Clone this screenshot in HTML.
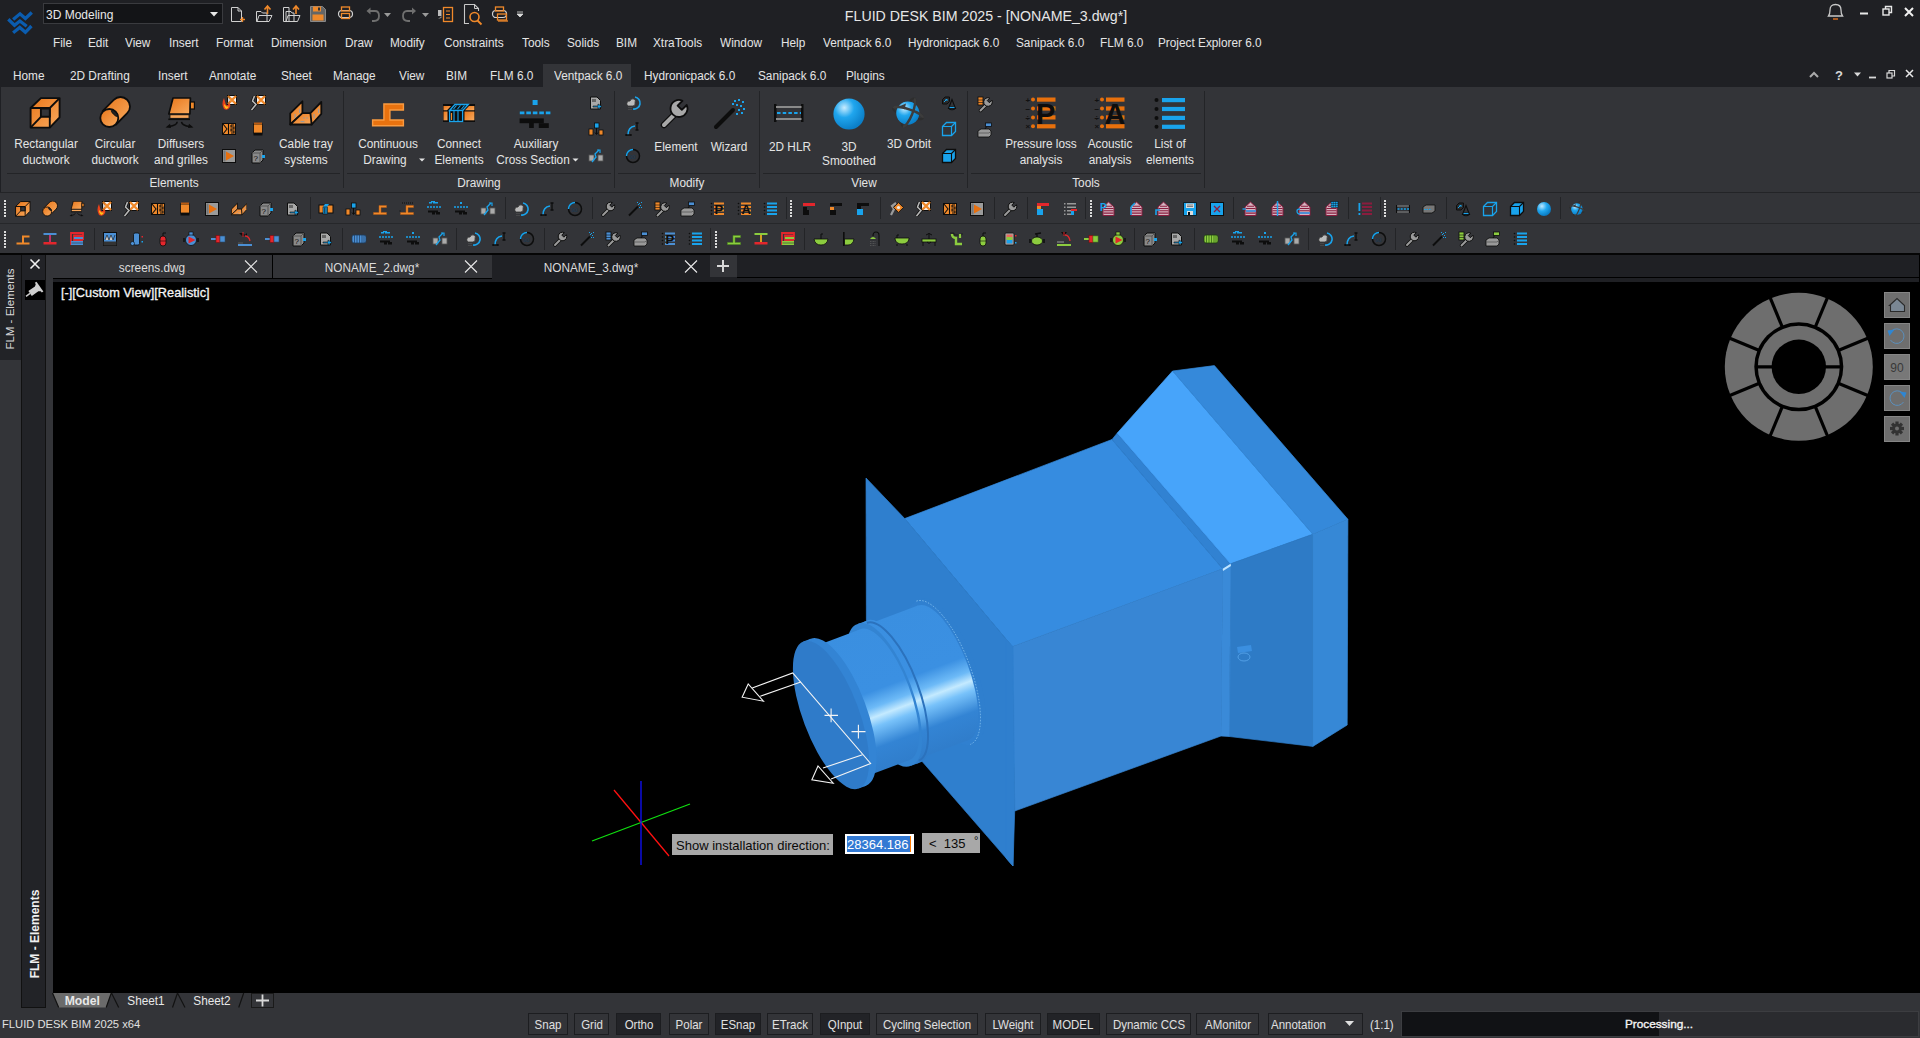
<!DOCTYPE html>
<html><head><meta charset="utf-8"><style>
html,body{margin:0;padding:0;width:1920px;height:1038px;overflow:hidden;background:#1f2024;}
.t{position:absolute;font-family:"Liberation Sans",sans-serif;white-space:pre;}
</style></head><body>
<div style="position:absolute;left:0px;top:0px;width:1920px;height:87px;background:#1f2024;"></div>
<div style="position:absolute;left:43px;top:3px;width:180px;height:21px;background:#131417;box-sizing:border-box;border:1px solid #3a3b3f;"></div>
<div class="t" style="left:46px;top:8.84px;transform-origin:left;font-size:12px;line-height:12px;color:#e8e8e8;">3D Modeling</div>
<svg style="position:absolute;left:210px;top:12px" width="8" height="5"><path d="M0 0H8L4 4.5Z" fill="#e8e8e8"/></svg>
<div class="t" style="left:686px;width:600px;text-align:center;top:8.78px;font-size:14.2px;line-height:14.2px;color:#e6e6e6;">FLUID DESK BIM 2025 - [NONAME_3.dwg*]</div>
<div class="t" style="left:52.5px;top:36.59px;transform-origin:left;font-size:12.3px;line-height:12.3px;color:#e4e4e4;transform:scaleX(0.96);">File</div>
<div class="t" style="left:87.5px;top:36.59px;transform-origin:left;font-size:12.3px;line-height:12.3px;color:#e4e4e4;transform:scaleX(0.96);">Edit</div>
<div class="t" style="left:125.4px;top:36.59px;transform-origin:left;font-size:12.3px;line-height:12.3px;color:#e4e4e4;transform:scaleX(0.96);">View</div>
<div class="t" style="left:168.5px;top:36.59px;transform-origin:left;font-size:12.3px;line-height:12.3px;color:#e4e4e4;transform:scaleX(0.96);">Insert</div>
<div class="t" style="left:215.5px;top:36.59px;transform-origin:left;font-size:12.3px;line-height:12.3px;color:#e4e4e4;transform:scaleX(0.96);">Format</div>
<div class="t" style="left:270.6px;top:36.59px;transform-origin:left;font-size:12.3px;line-height:12.3px;color:#e4e4e4;transform:scaleX(0.96);">Dimension</div>
<div class="t" style="left:344.6px;top:36.59px;transform-origin:left;font-size:12.3px;line-height:12.3px;color:#e4e4e4;transform:scaleX(0.96);">Draw</div>
<div class="t" style="left:390px;top:36.59px;transform-origin:left;font-size:12.3px;line-height:12.3px;color:#e4e4e4;transform:scaleX(0.96);">Modify</div>
<div class="t" style="left:444.4px;top:36.59px;transform-origin:left;font-size:12.3px;line-height:12.3px;color:#e4e4e4;transform:scaleX(0.96);">Constraints</div>
<div class="t" style="left:521.9px;top:36.59px;transform-origin:left;font-size:12.3px;line-height:12.3px;color:#e4e4e4;transform:scaleX(0.96);">Tools</div>
<div class="t" style="left:566.7px;top:36.59px;transform-origin:left;font-size:12.3px;line-height:12.3px;color:#e4e4e4;transform:scaleX(0.96);">Solids</div>
<div class="t" style="left:615.5px;top:36.59px;transform-origin:left;font-size:12.3px;line-height:12.3px;color:#e4e4e4;transform:scaleX(0.96);">BIM</div>
<div class="t" style="left:653px;top:36.59px;transform-origin:left;font-size:12.3px;line-height:12.3px;color:#e4e4e4;transform:scaleX(0.96);">XtraTools</div>
<div class="t" style="left:720px;top:36.59px;transform-origin:left;font-size:12.3px;line-height:12.3px;color:#e4e4e4;transform:scaleX(0.96);">Window</div>
<div class="t" style="left:780.7px;top:36.59px;transform-origin:left;font-size:12.3px;line-height:12.3px;color:#e4e4e4;transform:scaleX(0.96);">Help</div>
<div class="t" style="left:822.5px;top:36.59px;transform-origin:left;font-size:12.3px;line-height:12.3px;color:#e4e4e4;transform:scaleX(0.96);">Ventpack 6.0</div>
<div class="t" style="left:907.5px;top:36.59px;transform-origin:left;font-size:12.3px;line-height:12.3px;color:#e4e4e4;transform:scaleX(0.96);">Hydronicpack 6.0</div>
<div class="t" style="left:1016px;top:36.59px;transform-origin:left;font-size:12.3px;line-height:12.3px;color:#e4e4e4;transform:scaleX(0.96);">Sanipack 6.0</div>
<div class="t" style="left:1099.5px;top:36.59px;transform-origin:left;font-size:12.3px;line-height:12.3px;color:#e4e4e4;transform:scaleX(0.96);">FLM 6.0</div>
<div class="t" style="left:1158px;top:36.59px;transform-origin:left;font-size:12.3px;line-height:12.3px;color:#e4e4e4;transform:scaleX(0.96);">Project Explorer 6.0</div>
<svg style="position:absolute;left:0px;top:0px;overflow:visible" width="40" height="40" viewBox="0 0 40 40"><g fill="none" stroke="#0b5cae" stroke-width="3.3" stroke-linecap="square"><path d="M14.4 18.4L20 13.8L25.4 18.5L30.6 13.6"/><path d="M9.5 20.4L14.5 25.3L19.9 21L25.4 25.3"/><path d="M14.4 31.7L19.75 27.4L25.4 32.3L30.3 27.2"/></g></svg>
<svg style="position:absolute;left:0px;top:0px;overflow:visible" width="1920" height="30" viewBox="0 0 1920 30">
<g transform="translate(231,7)"><path d="M0.5 0.5H7L10.5 4V14.5H0.5Z" fill="none" stroke="#d0d0d0" stroke-width="1"/><path d="M7 0.5V4H10.5" fill="none" stroke="#d0d0d0"/><path d="M9 12.5H14M11.5 10V15" stroke="#f0892a" stroke-width="1.3"/></g>
<g transform="translate(256,5)"><path d="M0.5 6.5H5L6.5 8H11V16.5H0.5Z" fill="none" stroke="#d0d0d0"/><path d="M1 16.5L3 10.5H16L13 16.5Z" fill="none" stroke="#d0d0d0"/><path d="M11.5 9V1.5M8.5 4.5L11.5 1L14.5 4.5" stroke="#f0892a" stroke-width="1.6" fill="none"/></g>
<g transform="translate(283,5)"><path d="M0.5 2.5H6V16.5H0.5Z" fill="none" stroke="#d0d0d0"/><path d="M3 6.5H8L9 8H11V16.5H3Z" fill="none" stroke="#d0d0d0"/><path d="M3 16.5L5 10.5H17L14.5 16.5Z" fill="none" stroke="#d0d0d0"/><path d="M13 9V1.5M10 4.5L13 1L16 4.5" stroke="#f0892a" stroke-width="1.6" fill="none"/></g>
<g transform="translate(310,6)"><path d="M0.5 0.5H12.5L15.5 3.5V15.5H0.5Z" fill="#666" stroke="#888"/><rect x="3" y="0.5" width="8" height="5" fill="#f0892a"/><rect x="8" y="1.5" width="2" height="3" fill="#333"/><rect x="2.5" y="8.5" width="11" height="6" fill="#f0892a"/></g>
<g transform="translate(338,6)"><rect x="0.5" y="4.5" width="14" height="7" rx="3.5" fill="none" stroke="#d0d0d0" stroke-width="1.2"/><rect x="3.5" y="1" width="8" height="4" fill="none" stroke="#f0892a" stroke-width="1.3"/><rect x="3.5" y="7.5" width="8" height="5" fill="none" stroke="#f0892a" stroke-width="1.3"/></g>
<g transform="translate(366,8)"><path d="M3 3H9Q13 3 13 8Q13 13 8 13H6" fill="none" stroke="#6f6f6f" stroke-width="1.8"/><path d="M0.5 3L4.5 -0.5V6.5Z" fill="#6f6f6f"/></g>
<path d="M384 13H391L387.5 17Z" fill="#9a9a9a"/>
<g transform="translate(403,8)"><path d="M10 3H4Q0 3 0 8Q0 13 5 13H7" fill="none" stroke="#6f6f6f" stroke-width="1.8"/><path d="M13 3L9 -0.5V6.5Z" fill="#6f6f6f"/></g>
<path d="M422 13H429L425.5 17Z" fill="#9a9a9a"/>
<g transform="translate(438,7)"><rect x="0" y="3" width="3.5" height="6" fill="#bbb"/><path d="M0 12L3.5 9V11Z" fill="#888"/><rect x="5.5" y="0.5" width="9" height="14" fill="none" stroke="#f0892a" stroke-width="1.3"/><path d="M8 4H12M8 7.5H12M8 11H12" stroke="#f0892a" stroke-width="1.2"/></g>
<g transform="translate(464,4)"><path d="M0.5 0.5H10.5L14.5 4.5V7M0.5 0.5V19.5H5" fill="none" stroke="#c8c8c8" stroke-width="1.1"/><path d="M10.5 0.5V4.5H14.5" fill="none" stroke="#c8c8c8"/><circle cx="10.5" cy="13" r="4.5" fill="none" stroke="#f0892a" stroke-width="1.6"/><path d="M13.5 16.5L17.5 20.5" stroke="#f0892a" stroke-width="1.8"/></g>
<g transform="translate(492,6)"><rect x="0.5" y="4.5" width="14" height="7" rx="3.5" fill="none" stroke="#d0d0d0" stroke-width="1.2"/><rect x="3.5" y="1" width="8" height="4" fill="none" stroke="#f0892a" stroke-width="1.3"/><rect x="5.5" y="8" width="9" height="6" fill="none" stroke="#f0892a" stroke-width="1.3"/><path d="M6 15H16" stroke="#f0892a" stroke-width="1.3"/></g>
<path d="M517 12H523M517 14H523L520 17Z" fill="#dcdcdc" stroke="#dcdcdc" stroke-width=".8"/>
</svg>
<svg style="position:absolute;left:0px;top:0px;overflow:visible" width="1920" height="90" viewBox="0 0 1920 90">
<g transform="translate(1827,3)"><path d="M1.5 13Q3 11 3 7Q3 1.5 8.5 1.5Q14 1.5 14 7Q14 11 15.5 13Z" fill="none" stroke="#c8c8c8" stroke-width="1.3"/><path d="M6 16H11" stroke="#e07020" stroke-width="1.4"/></g>
<path d="M1860 13.5H1868" stroke="#e8e8e8" stroke-width="2"/>
<g fill="none" stroke="#e8e8e8" stroke-width="1.4"><rect x="1883" y="9" width="6" height="6"/><path d="M1885.5 9V6.5H1891.5V12.5H1889"/></g>
<path d="M1905 8L1913 16M1913 8L1905 16" stroke="#f0f0f0" stroke-width="2"/>
<path d="M1810 77L1814 73L1818 77" stroke="#aaa" stroke-width="2" fill="none"/>
<text x="1835" y="80" font-family="Liberation Sans" font-size="13" font-weight="bold" fill="#d8d8d8">?</text>
<path d="M1854 72.5H1861L1857.5 76.5Z" fill="#d8d8d8"/>
<path d="M1869 77.5H1876" stroke="#d8d8d8" stroke-width="1.8"/>
<g fill="none" stroke="#d8d8d8" stroke-width="1.2"><rect x="1887" y="73" width="5" height="5"/><path d="M1889 73V70.5H1894.5V76H1892"/></g>
<path d="M1906 70L1913 77M1913 70L1906 77" stroke="#e8e8e8" stroke-width="1.5"/>
</svg>
<div style="position:absolute;left:543px;top:64px;width:88px;height:23px;background:#333438;"></div>
<div class="t" style="left:12.5px;top:69.59px;transform-origin:left;font-size:12.3px;line-height:12.3px;color:#e4e4e4;transform:scaleX(0.96);">Home</div>
<div class="t" style="left:70.4px;top:69.59px;transform-origin:left;font-size:12.3px;line-height:12.3px;color:#e4e4e4;transform:scaleX(0.96);">2D Drafting</div>
<div class="t" style="left:157.5px;top:69.59px;transform-origin:left;font-size:12.3px;line-height:12.3px;color:#e4e4e4;transform:scaleX(0.96);">Insert</div>
<div class="t" style="left:209.4px;top:69.59px;transform-origin:left;font-size:12.3px;line-height:12.3px;color:#e4e4e4;transform:scaleX(0.96);">Annotate</div>
<div class="t" style="left:280.5px;top:69.59px;transform-origin:left;font-size:12.3px;line-height:12.3px;color:#e4e4e4;transform:scaleX(0.96);">Sheet</div>
<div class="t" style="left:333px;top:69.59px;transform-origin:left;font-size:12.3px;line-height:12.3px;color:#e4e4e4;transform:scaleX(0.96);">Manage</div>
<div class="t" style="left:398.6px;top:69.59px;transform-origin:left;font-size:12.3px;line-height:12.3px;color:#e4e4e4;transform:scaleX(0.96);">View</div>
<div class="t" style="left:446.4px;top:69.59px;transform-origin:left;font-size:12.3px;line-height:12.3px;color:#e4e4e4;transform:scaleX(0.96);">BIM</div>
<div class="t" style="left:489.7px;top:69.59px;transform-origin:left;font-size:12.3px;line-height:12.3px;color:#e4e4e4;transform:scaleX(0.96);">FLM 6.0</div>
<div class="t" style="left:553.8px;top:69.59px;transform-origin:left;font-size:12.3px;line-height:12.3px;color:#e4e4e4;transform:scaleX(0.96);">Ventpack 6.0</div>
<div class="t" style="left:643.5px;top:69.59px;transform-origin:left;font-size:12.3px;line-height:12.3px;color:#e4e4e4;transform:scaleX(0.96);">Hydronicpack 6.0</div>
<div class="t" style="left:757.7px;top:69.59px;transform-origin:left;font-size:12.3px;line-height:12.3px;color:#e4e4e4;transform:scaleX(0.96);">Sanipack 6.0</div>
<div class="t" style="left:845.5px;top:69.59px;transform-origin:left;font-size:12.3px;line-height:12.3px;color:#e4e4e4;transform:scaleX(0.96);">Plugins</div>
<div style="position:absolute;left:1px;top:87px;width:1919px;height:106px;background:#333438;"></div>
<div style="position:absolute;left:0px;top:192px;width:1920px;height:1px;background:#232427;"></div>
<div style="position:absolute;left:343px;top:91px;width:1px;height:97px;background:#232427;"></div>
<div style="position:absolute;left:614px;top:91px;width:1px;height:97px;background:#232427;"></div>
<div style="position:absolute;left:759px;top:91px;width:1px;height:97px;background:#232427;"></div>
<div style="position:absolute;left:967px;top:91px;width:1px;height:97px;background:#232427;"></div>
<div style="position:absolute;left:1204px;top:91px;width:1px;height:97px;background:#232427;"></div>
<div style="position:absolute;left:7px;top:173px;width:333px;height:1px;background:#232427;"></div>
<div style="position:absolute;left:347px;top:173px;width:264px;height:1px;background:#232427;"></div>
<div style="position:absolute;left:618px;top:173px;width:138px;height:1px;background:#232427;"></div>
<div style="position:absolute;left:763px;top:173px;width:201px;height:1px;background:#232427;"></div>
<div style="position:absolute;left:971px;top:173px;width:230px;height:1px;background:#232427;"></div>
<svg style="position:absolute;left:0px;top:0px;overflow:visible" width="1920" height="200" viewBox="0 0 1920 200">
<defs>
<linearGradient id="og" x1="0" y1="0" x2="1" y2="1"><stop offset="0" stop-color="#e8761a"/><stop offset="1" stop-color="#f9aa5e"/></linearGradient>
<radialGradient id="bsph" cx="35%" cy="30%" r="70%"><stop offset="0" stop-color="#c8ecff"/><stop offset=".45" stop-color="#20a6ee"/><stop offset="1" stop-color="#0b7fc8"/></radialGradient>
</defs>
<!-- rect ductwork -->
<g stroke="#0d0d0d" stroke-width="1.9" stroke-linejoin="round">
<path d="M30.6 108L40.9 98.1H59.6V117.3L49.8 127.6H30.6Z" fill="url(#og)"/>
<path d="M30.6 108H49.8V127.6M49.8 108L59.6 98.1" fill="none"/>
<rect x="40.9" y="108.5" width="8.9" height="8.3" fill="#333438"/>
<path d="M30.6 127.6L40.9 116.8" fill="none"/>
</g>
<!-- circular -->
<g stroke="#0d0d0d" stroke-width="1.8" stroke-linejoin="round" fill="url(#og)">
<path d="M102.55 111.1L113.75 99.8A9.5 9.5 0 0 1 127.25 113.2L116.05 124.5Z"/>
<circle cx="109.3" cy="118" r="9"/>
</g>
<ellipse cx="114.6" cy="113.3" rx="4.2" ry="1.5" transform="rotate(45 114.6 113.3)" fill="#222" stroke="#0d0d0d" stroke-width=".8"/>
<!-- diffusers -->
<g transform="translate(165,97.5)"><path d="M8 0.5H25.4L24.9 16.5H3.8Z" fill="url(#og)" stroke="#0d0d0d" stroke-width="1.7" stroke-linejoin="round"/><rect x="25.4" y="4.5" width="4" height="7" fill="#f0892a" stroke="#0d0d0d" stroke-width="1.2"/><rect x="5" y="17.3" width="19" height="3.5" fill="#f7a65a" stroke="#0d0d0d" stroke-width=".8"/><rect x="3.3" y="21" width="21.7" height="1.6" fill="#0d0d0d"/><path d="M12.2 24.3Q12 28 4 29M16.5 24.3Q17 28 25 29" stroke="#0d0d0d" stroke-width="1.6" fill="none"/><path d="M0.5 30L5 26.3L6 30.5Z M28.5 30L24 26.3L23 30.5Z" fill="#0d0d0d"/></g>
<!-- small elements col -->
<g transform="translate(221,95)"><rect x="6.5" y="0.5" width="9" height="9" fill="#f2f2f2" stroke="#0d0d0d" stroke-width="1"/><path d="M7 1L15 9M15 1L7 9" stroke="#f0892a" stroke-width="2.4"/><path d="M8 1V9" stroke="#0d0d0d" stroke-width=".3"/><path d="M3 3Q0 9 3 14Q7 16 9 12Q10 9 8 8Q7 11 5 10Q4 7 3 3Z" fill="#e8401a"/><path d="M3 9Q3 13 5.5 14Q8 13 7.5 11Q6 12 5 11Q4 10 3 9Z" fill="#ffc21a"/></g>
<g transform="translate(250,95)"><rect x="6.5" y="0.5" width="9" height="9" fill="#f2f2f2" stroke="#0d0d0d" stroke-width="1"/><path d="M7 1L15 9M15 1L7 9" stroke="#f0892a" stroke-width="2.4"/><path d="M4.5 1L2.5 6L6 9.5L1.5 15" stroke="#0d0d0d" stroke-width="3" fill="none"/><path d="M4.5 1L2.5 6L6 9.5L1.5 15" stroke="#b8b8b8" stroke-width="1.6" fill="none"/></g>
<g transform="translate(221,121)"><rect x="1.5" y="2.5" width="13" height="11" fill="#f0892a" stroke="#0d0d0d" stroke-width="1"/><path d="M2 3L6 8L2 13M7.5 2.5V13.5M10 4H13M10 4V6H13V8H10V10H13V12H10" stroke="#0d0d0d" stroke-width="1.1" fill="none"/></g>
<g transform="translate(250,121)"><rect x="3.5" y="3" width="9" height="9" fill="#f0892a" stroke="#0d0d0d" stroke-width=".8"/><rect x="3.5" y="12" width="9" height="2.5" fill="#0d0d0d"/><rect x="4" y="1.5" width="8" height="1.5" fill="#b85a12"/></g>
<g transform="translate(221,148)"><rect x="1.5" y="1.5" width="13" height="13" fill="#9b9b9b" stroke="#0d0d0d" stroke-width="1"/><path d="M5 3.5L13 8L5 12.5Z" fill="#e8700f"/><rect x="2.5" y="2.5" width="2" height="11" fill="#777"/></g>
<g transform="translate(250,148)"><path d="M2 5L5 2H13V12L10 15H2Z" fill="#8a8a8a" stroke="#0d0d0d" stroke-width="1"/><path d="M2 5H10V15M10 5L13 2" stroke="#555" fill="none"/><text x="3.5" y="13" font-size="8" font-family="Liberation Sans" fill="#0d0d0d">?</text><rect x="12" y="7" width="3" height="3" fill="#19a3ec"/></g>
<!-- cable tray -->
<g stroke="#0d0d0d" stroke-width="1.8" stroke-linejoin="round" fill="url(#og)">
<path d="M290.2 113.4L302.4 101.3V113.3L290.2 124.5Z"/>
<path d="M290.2 124.5H311.7V113.1H302.4Z"/>
<path d="M310.4 113.1L321.3 102V113.8L311.7 124.5Z"/>
</g>
<g fill="#9a9a9a"><rect x="294.5" y="114" width="1.2" height="4"/><rect x="299" y="109" width="1.2" height="4"/><rect x="313.5" y="114" width="1.2" height="4"/><rect x="318" y="109" width="1.2" height="4"/><rect x="300.5" y="121" width="4" height="1.2"/><circle cx="304" cy="118" r=".8"/><circle cx="307" cy="118" r=".8"/></g>
<!-- continuous drawing 372-404, 104-126 -->
<g transform="translate(372.6,104)"><path d="M0 16H11.3V0H30.8V6H17.3V16H30.8V21.8H0Z" fill="#e8720f" stroke="#f99a40" stroke-width="1.4"/></g>
<!-- connect elements -->
<rect x="443" y="104" width="32" height="18" fill="#0d0d0d"/>
<path d="M443.5 106H451L447 110.3H443.5Z" fill="url(#og)"/>
<rect x="443.5" y="111.5" width="4" height="8.8" fill="url(#og)"/>
<path d="M469 106H474.4V110.3H465Z" fill="url(#og)"/>
<rect x="464.5" y="111.5" width="9.9" height="8.8" fill="url(#og)"/>
<path d="M449.6 110.5L454.9 104.5H468.3L462.6 110.5Z" fill="#0d0d0d" stroke="#19a3ec" stroke-width="1.3"/>
<rect x="449.6" y="110.5" width="13" height="11" fill="#0d0d0d" stroke="#19a3ec" stroke-width="1.3"/>
<path d="M454 111V121M458 111V121M453.5 109L456.5 105.5M457.5 109L460.5 105.5M461.5 109L464.5 105.5" stroke="#19a3ec" stroke-width="1.1"/>
<path d="M451.5 113V120" stroke="#f0892a" stroke-width="1.2"/>
<!-- auxiliary cross section -->
<rect x="532.6" y="100" width="5" height="5" fill="#19a3ec"/>
<path d="M519.8 112.9H550.4" stroke="#19a3ec" stroke-width="2.8" stroke-dasharray="4.6 1.9"/>
<rect x="519.6" y="118.4" width="24.2" height="4.8" fill="#0d0d0d"/>
<rect x="529.1" y="123" width="4.7" height="5" fill="#0d0d0d"/>
<rect x="538.8" y="123.2" width="10" height="4.8" fill="#0d0d0d"/>
<path d="M419 158.5H425L422 161.5Z" fill="#e4e4e4"/>
<path d="M572.5 158.5H578.5L575.5 161.5Z" fill="#e4e4e4"/>
<g transform="translate(588,95)"><path d="M2.5 2H9L12.5 5.5V14H2.5Z" fill="#a9a9a9" stroke="#0d0d0d" stroke-width="1"/><rect x="4" y="4" width="4" height="3" fill="#666"/><path d="M5 11H10V9L14 11.5L10 14V12H5Z" fill="#19a3ec" stroke="#0d0d0d" stroke-width=".6"/></g>
<g transform="translate(588,121)"><rect x="1" y="8" width="4" height="6" fill="#f0892a" stroke="#0d0d0d" stroke-width=".8"/><rect x="11" y="9" width="4" height="5" fill="#f0892a" stroke="#0d0d0d" stroke-width=".8"/><rect x="6.5" y="2" width="4.5" height="5" fill="#19a3ec" stroke="#0d0d0d" stroke-width=".8"/><path d="M8.5 7V13M7 11.5L8.5 13.5L10 11.5" stroke="#0d0d0d" stroke-width="1" fill="none"/></g>
<g transform="translate(588,148)"><rect x="1" y="7" width="5" height="6" fill="#aaa" stroke="#555" stroke-width=".8"/><rect x="10" y="7" width="5" height="6" fill="#aaa" stroke="#555" stroke-width=".8"/><path d="M4 14L8 9L7 6L11 2" stroke="#19a3ec" stroke-width="1.3" fill="none"/><path d="M9 2H12V5" stroke="#19a3ec" stroke-width="1.2" fill="none"/></g>
<g transform="translate(625,95)"><path d="M2 10Q1 6 5 6Q6 3 9 4Q11 5 10 8Q11 10 8 11H3Z" fill="#bbb" stroke="#333" stroke-width=".8"/><path d="M10 2A6 6 0 0 1 8 14" stroke="#19a3ec" stroke-width="1.6" fill="none"/><path d="M4 12V15M6 12V15" stroke="#666" stroke-width=".8" stroke-dasharray="1 1"/></g>
<g transform="translate(625,121)"><path d="M3 14Q3 6 10 5" stroke="#19a3ec" stroke-width="1.6" fill="none"/><path d="M12 2V9M10.5 2H13.5M10.5 9H13.5M1 13V15M1 14H6M6 13V15" stroke="#0d0d0d" stroke-width="1.3"/></g>
<g transform="translate(625,148)"><circle cx="8" cy="8" r="6.5" fill="none" stroke="#0d0d0d" stroke-width="1.5"/><path d="M1.5 8A6.5 6.5 0 0 1 8 1.5" stroke="#19a3ec" stroke-width="1.5" fill="none"/><text x="4" y="10.5" font-size="6" font-family="Liberation Sans" fill="#1a3a55">90</text></g>
<!-- element wrench 660-690, 99-129 -->
<g transform="translate(659,99)"><path d="M5 26L17 14" stroke="#0d0d0d" stroke-width="6.5" stroke-linecap="round"/><path d="M5 26L17 14" stroke="#a8a8a8" stroke-width="4" stroke-linecap="round"/><path d="M27.74 6A8.5 8.5 0 1 1 23.5 1.76L18.59 6.67L22.83 10.91Z" fill="#a8a8a8" stroke="#0d0d0d" stroke-width="1.8" stroke-linejoin="round"/></g>
<!-- wizard 713-745 -->
<g transform="translate(713,99)"><path d="M3 28L20 11" stroke="#0d0d0d" stroke-width="4" stroke-linecap="round"/><g fill="#19a3ec"><rect x="21" y="1" width="2" height="2"/><rect x="25" y="0" width="2" height="2"/><rect x="29" y="2" width="2" height="2"/><rect x="23" y="5" width="2" height="2"/><rect x="27" y="6" width="2" height="2"/><rect x="30" y="9" width="2" height="2"/><rect x="25" y="10" width="2" height="2"/><rect x="28" y="13" width="2" height="2"/><rect x="23" y="14" width="2" height="2"/><rect x="19" y="4" width="2" height="2"/></g></g>
<!-- 2D HLR 774-803, 104-122 -->
<g transform="translate(774,104)"><rect x="0" y="0" width="2.5" height="18" fill="#0d0d0d"/><rect x="27" y="0" width="2.5" height="18" fill="#0d0d0d"/><path d="M2 3H27.5M2 15H27.5" stroke="#8a8a8a" stroke-width="2"/><path d="M3 9H27" stroke="#19a3ec" stroke-width="2" stroke-dasharray="3.5 2.2"/></g>
<circle cx="849" cy="114" r="15.6" fill="url(#bsph)"/>
<!-- orbit -->
<ellipse cx="908" cy="113" rx="15.5" ry="4.2" transform="rotate(18 908 113)" fill="none" stroke="#2e2e2e" stroke-width="2.2"/>
<ellipse cx="908.5" cy="112.5" rx="15" ry="4.2" transform="rotate(-68 908.5 112.5)" fill="none" stroke="#2e2e2e" stroke-width="2.2"/>
<circle cx="907.8" cy="113.1" r="11.6" fill="url(#bsph)"/>
<path d="M893.3 108.2A15.5 4.2 18 0 1 922.7 117.8" fill="none" stroke="#3c3c3c" stroke-width="2.4"/>
<path d="M914.1 98.6A15 4.2 -68 0 1 902.9 126.4" fill="none" stroke="#3c3c3c" stroke-width="2.4"/>
<path d="M900 106L906 103.5L904.5 109.5Z" fill="#3c3c3c"/>
<g transform="translate(941,95)"><path d="M1.5 4.5L4 2H8.5V6.5L6 9H1.5Z" fill="#2a2a2a" stroke="#0d0d0d" stroke-width="1"/><path d="M3 7L6 4M4 5H7" stroke="#19a3ec" stroke-width="1"/><path d="M11 4.5L7.5 13.5H14.5Z" fill="none" stroke="#0d0d0d" stroke-width="1.1"/><ellipse cx="11" cy="13.3" rx="3.3" ry="1.5" fill="none" stroke="#0d0d0d" stroke-width="1"/><path d="M8.5 12.5H13.5" stroke="#19a3ec" stroke-width="1.2"/></g>
<g transform="translate(941,121)"><path d="M1.5 5.5L5.5 1.5H14.5V10.5L10.5 14.5H1.5Z" fill="none" stroke="#19a3ec" stroke-width="1.3"/><path d="M1.5 5.5H10.5V14.5M10.5 5.5L14.5 1.5" stroke="#19a3ec" stroke-width="1.2" fill="none"/></g>
<g transform="translate(941,148)"><path d="M1.5 5.5L5.5 1.5H14.5V10.5L10.5 14.5H1.5Z" fill="#19a3ec" stroke="#0d0d0d" stroke-width="1.3"/><path d="M1.5 5.5H10.5V14.5M10.5 5.5L14.5 1.5" stroke="#0d0d0d" stroke-width="1.1" fill="none"/></g>
<g transform="translate(977,96)"><rect x="1" y="1" width="5" height="8" fill="#f0892a" stroke="#0d0d0d" stroke-width=".8"/><path d="M1 4H6M1 6.5H6" stroke="#0d0d0d" stroke-width=".6"/><path d="M3.5 14.5L10 8" stroke="#0d0d0d" stroke-width="3.4" stroke-linecap="round"/><path d="M3.5 14.5L10 8" stroke="#9b9b9b" stroke-width="1.9" stroke-linecap="round"/><g transform="translate(0.5,0.5)"><path d="M14.41 3.71A4.3 4.3 0 1 1 12.29 1.59L9.79 4.09L11.91 6.21Z" fill="#9b9b9b" stroke="#0d0d0d" stroke-width="1" stroke-linejoin="round"/></g></g>
<g transform="translate(977,122)"><path d="M1 9L4 7H12L14 9V13L12 15H1Z" fill="#999" stroke="#0d0d0d" stroke-width=".8"/><path d="M1 11H12L14 9" stroke="#555" fill="none" stroke-width=".8"/><path d="M8 7L10 4" stroke="#0d0d0d" stroke-width="1"/><rect x="8.5" y="1" width="6" height="3.5" fill="#4b8fd4" stroke="#0d0d0d" stroke-width=".8"/></g>
<g transform="translate(1025,96)"><rect x="12" y="1.5" width="18.5" height="4.2" fill="#e8700c"/><circle cx="8" cy="3.6" r="2" fill="#e8700c"/><text x="0.5" y="6.7" font-size="8" font-weight="bold" font-family="Liberation Sans" fill="#111">+</text><rect x="12" y="10.4" width="18.5" height="4.2" fill="#e8700c"/><circle cx="8" cy="12.5" r="2" fill="#e8700c"/><text x="0.5" y="15.6" font-size="8" font-weight="bold" font-family="Liberation Sans" fill="#111">−</text><rect x="12" y="19.3" width="18.5" height="4.2" fill="#e8700c"/><circle cx="8" cy="21.4" r="2" fill="#e8700c"/><text x="0.5" y="24.5" font-size="8" font-weight="bold" font-family="Liberation Sans" fill="#111">÷</text><rect x="12" y="28.2" width="18.5" height="4.2" fill="#e8700c"/><circle cx="8" cy="30.3" r="2" fill="#e8700c"/><text x="0.5" y="33.4" font-size="8" font-weight="bold" font-family="Liberation Sans" fill="#111">×</text><text x="11" y="27.5" font-size="29" font-weight="bold" font-family="Liberation Sans" fill="#0d0d0d">P</text></g><g transform="translate(1094,96)"><rect x="12" y="1.5" width="18.5" height="4.2" fill="#e8700c"/><circle cx="8" cy="3.6" r="2" fill="#e8700c"/><text x="0.5" y="6.7" font-size="8" font-weight="bold" font-family="Liberation Sans" fill="#111">+</text><rect x="12" y="10.4" width="18.5" height="4.2" fill="#e8700c"/><circle cx="8" cy="12.5" r="2" fill="#e8700c"/><text x="0.5" y="15.6" font-size="8" font-weight="bold" font-family="Liberation Sans" fill="#111">−</text><rect x="12" y="19.3" width="18.5" height="4.2" fill="#e8700c"/><circle cx="8" cy="21.4" r="2" fill="#e8700c"/><text x="0.5" y="24.5" font-size="8" font-weight="bold" font-family="Liberation Sans" fill="#111">÷</text><rect x="12" y="28.2" width="18.5" height="4.2" fill="#e8700c"/><circle cx="8" cy="30.3" r="2" fill="#e8700c"/><text x="0.5" y="33.4" font-size="8" font-weight="bold" font-family="Liberation Sans" fill="#111">×</text><text x="10.5" y="27.5" font-size="29" font-weight="bold" font-family="Liberation Sans" fill="#0d0d0d">A</text></g><g transform="translate(1154,97)"><rect x="8" y="1.0" width="23" height="4.2" fill="#19a3ec"/><circle cx="2.5" cy="3.1" r="2" fill="#0d0d0d"/><rect x="8" y="9.9" width="23" height="4.2" fill="#19a3ec"/><circle cx="2.5" cy="12.0" r="2" fill="#0d0d0d"/><rect x="8" y="18.8" width="23" height="4.2" fill="#19a3ec"/><circle cx="2.5" cy="20.9" r="2" fill="#0d0d0d"/><rect x="8" y="27.7" width="23" height="4.2" fill="#19a3ec"/><circle cx="2.5" cy="29.8" r="2" fill="#0d0d0d"/></g></svg>
<div class="t" style="left:-254.2px;width:600px;text-align:center;top:137.59px;font-size:12.3px;line-height:12.3px;color:#e4e4e4;transform:scaleX(0.96);">Rectangular</div>
<div class="t" style="left:-254.5px;width:600px;text-align:center;top:153.84px;font-size:12.3px;line-height:12.3px;color:#e4e4e4;transform:scaleX(0.96);">ductwork</div>
<div class="t" style="left:-185px;width:600px;text-align:center;top:137.59px;font-size:12.3px;line-height:12.3px;color:#e4e4e4;transform:scaleX(0.96);">Circular</div>
<div class="t" style="left:-184.7px;width:600px;text-align:center;top:153.84px;font-size:12.3px;line-height:12.3px;color:#e4e4e4;transform:scaleX(0.96);">ductwork</div>
<div class="t" style="left:-119.5px;width:600px;text-align:center;top:137.59px;font-size:12.3px;line-height:12.3px;color:#e4e4e4;transform:scaleX(0.96);">Diffusers</div>
<div class="t" style="left:-119.4px;width:600px;text-align:center;top:153.84px;font-size:12.3px;line-height:12.3px;color:#e4e4e4;transform:scaleX(0.96);">and grilles</div>
<div class="t" style="left:6px;width:600px;text-align:center;top:137.59px;font-size:12.3px;line-height:12.3px;color:#e4e4e4;transform:scaleX(0.96);">Cable tray</div>
<div class="t" style="left:6px;width:600px;text-align:center;top:153.84px;font-size:12.3px;line-height:12.3px;color:#e4e4e4;transform:scaleX(0.96);">systems</div>
<div class="t" style="left:88px;width:600px;text-align:center;top:138.09px;font-size:12.3px;line-height:12.3px;color:#e4e4e4;transform:scaleX(0.96);">Continuous</div>
<div class="t" style="left:85.30000000000001px;width:600px;text-align:center;top:154.09px;font-size:12.3px;line-height:12.3px;color:#e4e4e4;transform:scaleX(0.96);">Drawing</div>
<div class="t" style="left:159px;width:600px;text-align:center;top:138.09px;font-size:12.3px;line-height:12.3px;color:#e4e4e4;transform:scaleX(0.96);">Connect</div>
<div class="t" style="left:159.2px;width:600px;text-align:center;top:154.09px;font-size:12.3px;line-height:12.3px;color:#e4e4e4;transform:scaleX(0.96);">Elements</div>
<div class="t" style="left:235.70000000000005px;width:600px;text-align:center;top:138.09px;font-size:12.3px;line-height:12.3px;color:#e4e4e4;transform:scaleX(0.96);">Auxiliary</div>
<div class="t" style="left:232.89999999999998px;width:600px;text-align:center;top:154.09px;font-size:12.3px;line-height:12.3px;color:#e4e4e4;transform:scaleX(0.96);">Cross Section</div>
<div class="t" style="left:375.5px;width:600px;text-align:center;top:141.09px;font-size:12.3px;line-height:12.3px;color:#e4e4e4;transform:scaleX(0.96);">Element</div>
<div class="t" style="left:429.29999999999995px;width:600px;text-align:center;top:141.09px;font-size:12.3px;line-height:12.3px;color:#e4e4e4;transform:scaleX(0.96);">Wizard</div>
<div class="t" style="left:489.70000000000005px;width:600px;text-align:center;top:141.09px;font-size:12.3px;line-height:12.3px;color:#e4e4e4;transform:scaleX(0.96);">2D HLR</div>
<div class="t" style="left:549px;width:600px;text-align:center;top:141.09px;font-size:12.3px;line-height:12.3px;color:#e4e4e4;transform:scaleX(0.96);">3D</div>
<div class="t" style="left:549px;width:600px;text-align:center;top:154.69px;font-size:12.3px;line-height:12.3px;color:#e4e4e4;transform:scaleX(0.96);">Smoothed</div>
<div class="t" style="left:608.5px;width:600px;text-align:center;top:137.84px;font-size:12.3px;line-height:12.3px;color:#e4e4e4;transform:scaleX(0.96);">3D Orbit</div>
<div class="t" style="left:741.3px;width:600px;text-align:center;top:138.09px;font-size:12.3px;line-height:12.3px;color:#e4e4e4;transform:scaleX(0.96);">Pressure loss</div>
<div class="t" style="left:741.3px;width:600px;text-align:center;top:153.84px;font-size:12.3px;line-height:12.3px;color:#e4e4e4;transform:scaleX(0.96);">analysis</div>
<div class="t" style="left:810.3px;width:600px;text-align:center;top:138.09px;font-size:12.3px;line-height:12.3px;color:#e4e4e4;transform:scaleX(0.96);">Acoustic</div>
<div class="t" style="left:810.3px;width:600px;text-align:center;top:153.84px;font-size:12.3px;line-height:12.3px;color:#e4e4e4;transform:scaleX(0.96);">analysis</div>
<div class="t" style="left:870.3px;width:600px;text-align:center;top:138.09px;font-size:12.3px;line-height:12.3px;color:#e4e4e4;transform:scaleX(0.96);">List of</div>
<div class="t" style="left:870px;width:600px;text-align:center;top:153.84px;font-size:12.3px;line-height:12.3px;color:#e4e4e4;transform:scaleX(0.96);">elements</div>
<div class="t" style="left:-126px;width:600px;text-align:center;top:176.59px;font-size:12.3px;line-height:12.3px;color:#e4e4e4;transform:scaleX(0.96);">Elements</div>
<div class="t" style="left:179px;width:600px;text-align:center;top:176.59px;font-size:12.3px;line-height:12.3px;color:#e4e4e4;transform:scaleX(0.96);">Drawing</div>
<div class="t" style="left:387px;width:600px;text-align:center;top:176.59px;font-size:12.3px;line-height:12.3px;color:#e4e4e4;transform:scaleX(0.96);">Modify</div>
<div class="t" style="left:564px;width:600px;text-align:center;top:176.59px;font-size:12.3px;line-height:12.3px;color:#e4e4e4;transform:scaleX(0.96);">View</div>
<div class="t" style="left:786px;width:600px;text-align:center;top:176.59px;font-size:12.3px;line-height:12.3px;color:#e4e4e4;transform:scaleX(0.96);">Tools</div>
<div style="position:absolute;left:0px;top:193px;width:1920px;height:30px;background:#333438;"></div>
<div style="position:absolute;left:0px;top:223px;width:1920px;height:1px;background:#26272a;"></div>
<div style="position:absolute;left:0px;top:224px;width:1920px;height:30px;background:#333438;"></div>
<div style="position:absolute;left:0px;top:253px;width:1920px;height:2px;background:#050505;"></div>
<div style="position:absolute;left:310px;top:197px;width:1px;height:22px;background:#232427;"></div>
<div style="position:absolute;left:505px;top:197px;width:1px;height:22px;background:#232427;"></div>
<div style="position:absolute;left:592px;top:197px;width:1px;height:22px;background:#232427;"></div>
<div style="position:absolute;left:786px;top:197px;width:1px;height:22px;background:#232427;"></div>
<div style="position:absolute;left:880px;top:197px;width:1px;height:22px;background:#232427;"></div>
<div style="position:absolute;left:994px;top:197px;width:1px;height:22px;background:#232427;"></div>
<div style="position:absolute;left:1027px;top:197px;width:1px;height:22px;background:#232427;"></div>
<div style="position:absolute;left:1085px;top:197px;width:1px;height:22px;background:#232427;"></div>
<div style="position:absolute;left:1233px;top:197px;width:1px;height:22px;background:#232427;"></div>
<div style="position:absolute;left:1348px;top:197px;width:1px;height:22px;background:#232427;"></div>
<div style="position:absolute;left:1380px;top:197px;width:1px;height:22px;background:#232427;"></div>
<div style="position:absolute;left:1446px;top:197px;width:1px;height:22px;background:#232427;"></div>
<div style="position:absolute;left:1560px;top:197px;width:1px;height:22px;background:#232427;"></div>
<div style="position:absolute;left:94px;top:228px;width:1px;height:22px;background:#232427;"></div>
<div style="position:absolute;left:342px;top:228px;width:1px;height:22px;background:#232427;"></div>
<div style="position:absolute;left:456px;top:228px;width:1px;height:22px;background:#232427;"></div>
<div style="position:absolute;left:544px;top:228px;width:1px;height:22px;background:#232427;"></div>
<div style="position:absolute;left:710px;top:228px;width:1px;height:22px;background:#232427;"></div>
<div style="position:absolute;left:804px;top:228px;width:1px;height:22px;background:#232427;"></div>
<div style="position:absolute;left:1134px;top:228px;width:1px;height:22px;background:#232427;"></div>
<div style="position:absolute;left:1194px;top:228px;width:1px;height:22px;background:#232427;"></div>
<div style="position:absolute;left:1308px;top:228px;width:1px;height:22px;background:#232427;"></div>
<div style="position:absolute;left:1395px;top:228px;width:1px;height:22px;background:#232427;"></div>
<div style="position:absolute;left:4px;top:200px;width:2px;height:2px;background:#dcdcdc;"></div>
<div style="position:absolute;left:4px;top:203px;width:2px;height:2px;background:#dcdcdc;"></div>
<div style="position:absolute;left:4px;top:206px;width:2px;height:2px;background:#dcdcdc;"></div>
<div style="position:absolute;left:4px;top:209px;width:2px;height:2px;background:#dcdcdc;"></div>
<div style="position:absolute;left:4px;top:212px;width:2px;height:2px;background:#dcdcdc;"></div>
<div style="position:absolute;left:4px;top:215px;width:2px;height:2px;background:#dcdcdc;"></div>
<div style="position:absolute;left:790px;top:200px;width:2px;height:2px;background:#dcdcdc;"></div>
<div style="position:absolute;left:790px;top:203px;width:2px;height:2px;background:#dcdcdc;"></div>
<div style="position:absolute;left:790px;top:206px;width:2px;height:2px;background:#dcdcdc;"></div>
<div style="position:absolute;left:790px;top:209px;width:2px;height:2px;background:#dcdcdc;"></div>
<div style="position:absolute;left:790px;top:212px;width:2px;height:2px;background:#dcdcdc;"></div>
<div style="position:absolute;left:790px;top:215px;width:2px;height:2px;background:#dcdcdc;"></div>
<div style="position:absolute;left:1090px;top:200px;width:2px;height:2px;background:#dcdcdc;"></div>
<div style="position:absolute;left:1090px;top:203px;width:2px;height:2px;background:#dcdcdc;"></div>
<div style="position:absolute;left:1090px;top:206px;width:2px;height:2px;background:#dcdcdc;"></div>
<div style="position:absolute;left:1090px;top:209px;width:2px;height:2px;background:#dcdcdc;"></div>
<div style="position:absolute;left:1090px;top:212px;width:2px;height:2px;background:#dcdcdc;"></div>
<div style="position:absolute;left:1090px;top:215px;width:2px;height:2px;background:#dcdcdc;"></div>
<div style="position:absolute;left:1384px;top:200px;width:2px;height:2px;background:#dcdcdc;"></div>
<div style="position:absolute;left:1384px;top:203px;width:2px;height:2px;background:#dcdcdc;"></div>
<div style="position:absolute;left:1384px;top:206px;width:2px;height:2px;background:#dcdcdc;"></div>
<div style="position:absolute;left:1384px;top:209px;width:2px;height:2px;background:#dcdcdc;"></div>
<div style="position:absolute;left:1384px;top:212px;width:2px;height:2px;background:#dcdcdc;"></div>
<div style="position:absolute;left:1384px;top:215px;width:2px;height:2px;background:#dcdcdc;"></div>
<div style="position:absolute;left:4px;top:231px;width:2px;height:2px;background:#dcdcdc;"></div>
<div style="position:absolute;left:4px;top:234px;width:2px;height:2px;background:#dcdcdc;"></div>
<div style="position:absolute;left:4px;top:237px;width:2px;height:2px;background:#dcdcdc;"></div>
<div style="position:absolute;left:4px;top:240px;width:2px;height:2px;background:#dcdcdc;"></div>
<div style="position:absolute;left:4px;top:243px;width:2px;height:2px;background:#dcdcdc;"></div>
<div style="position:absolute;left:4px;top:246px;width:2px;height:2px;background:#dcdcdc;"></div>
<div style="position:absolute;left:715px;top:231px;width:2px;height:2px;background:#dcdcdc;"></div>
<div style="position:absolute;left:715px;top:234px;width:2px;height:2px;background:#dcdcdc;"></div>
<div style="position:absolute;left:715px;top:237px;width:2px;height:2px;background:#dcdcdc;"></div>
<div style="position:absolute;left:715px;top:240px;width:2px;height:2px;background:#dcdcdc;"></div>
<div style="position:absolute;left:715px;top:243px;width:2px;height:2px;background:#dcdcdc;"></div>
<div style="position:absolute;left:715px;top:246px;width:2px;height:2px;background:#dcdcdc;"></div>
<svg style="position:absolute;left:15.0px;top:200.5px" width="16" height="16" viewBox="0 0 16 16"><g transform="scale(0.5) translate(-29.5,-97)"><!-- rect ductwork -->
<g stroke="#0d0d0d" stroke-width="1.9" stroke-linejoin="round">
<path d="M30.6 108L40.9 98.1H59.6V117.3L49.8 127.6H30.6Z" fill="url(#og)"/>
<path d="M30.6 108H49.8V127.6M49.8 108L59.6 98.1" fill="none"/>
<rect x="40.9" y="108.5" width="8.9" height="8.3" fill="#333438"/>
<path d="M30.6 127.6L40.9 116.8" fill="none"/>
</g>
</g></svg>
<svg style="position:absolute;left:42.0px;top:200.5px" width="16" height="16" viewBox="0 0 16 16"><g transform="scale(0.5) translate(-99,-97)"><!-- circular -->
<g stroke="#0d0d0d" stroke-width="1.8" stroke-linejoin="round" fill="url(#og)">
<path d="M102.55 111.1L113.75 99.8A9.5 9.5 0 0 1 127.25 113.2L116.05 124.5Z"/>
<circle cx="109.3" cy="118" r="9"/>
</g>
<ellipse cx="114.6" cy="113.3" rx="4.2" ry="1.5" transform="rotate(45 114.6 113.3)" fill="#222" stroke="#0d0d0d" stroke-width=".8"/>
</g></svg>
<svg style="position:absolute;left:69.0px;top:200.5px" width="16" height="16" viewBox="0 0 16 16"><g transform="scale(0.5) translate(-164.5,-97.5)"><!-- diffusers -->
<g transform="translate(165,97.5)"><path d="M8 0.5H25.4L24.9 16.5H3.8Z" fill="url(#og)" stroke="#0d0d0d" stroke-width="1.7" stroke-linejoin="round"/><rect x="25.4" y="4.5" width="4" height="7" fill="#f0892a" stroke="#0d0d0d" stroke-width="1.2"/><rect x="5" y="17.3" width="19" height="3.5" fill="#f7a65a" stroke="#0d0d0d" stroke-width=".8"/><rect x="3.3" y="21" width="21.7" height="1.6" fill="#0d0d0d"/><path d="M12.2 24.3Q12 28 4 29M16.5 24.3Q17 28 25 29" stroke="#0d0d0d" stroke-width="1.6" fill="none"/><path d="M0.5 30L5 26.3L6 30.5Z M28.5 30L24 26.3L23 30.5Z" fill="#0d0d0d"/></g>
</g></svg>
<svg style="position:absolute;left:96.0px;top:200.5px" width="16" height="16" viewBox="0 0 16 16"><rect x="6.5" y="0.5" width="9" height="9" fill="#f2f2f2" stroke="#0d0d0d" stroke-width="1"/><path d="M7 1L15 9M15 1L7 9" stroke="#f0892a" stroke-width="2.4"/><path d="M8 1V9" stroke="#0d0d0d" stroke-width=".3"/><path d="M3 3Q0 9 3 14Q7 16 9 12Q10 9 8 8Q7 11 5 10Q4 7 3 3Z" fill="#e8401a"/><path d="M3 9Q3 13 5.5 14Q8 13 7.5 11Q6 12 5 11Q4 10 3 9Z" fill="#ffc21a"/></svg>
<svg style="position:absolute;left:123.0px;top:200.5px" width="16" height="16" viewBox="0 0 16 16"><rect x="6.5" y="0.5" width="9" height="9" fill="#f2f2f2" stroke="#0d0d0d" stroke-width="1"/><path d="M7 1L15 9M15 1L7 9" stroke="#f0892a" stroke-width="2.4"/><path d="M4.5 1L2.5 6L6 9.5L1.5 15" stroke="#0d0d0d" stroke-width="3" fill="none"/><path d="M4.5 1L2.5 6L6 9.5L1.5 15" stroke="#b8b8b8" stroke-width="1.6" fill="none"/></svg>
<svg style="position:absolute;left:149.5px;top:200.5px" width="16" height="16" viewBox="0 0 16 16"><rect x="1.5" y="2.5" width="13" height="11" fill="#f0892a" stroke="#0d0d0d" stroke-width="1"/><path d="M2 3L6 8L2 13M7.5 2.5V13.5M10 4H13M10 4V6H13V8H10V10H13V12H10" stroke="#0d0d0d" stroke-width="1.1" fill="none"/></svg>
<svg style="position:absolute;left:176.7px;top:200.5px" width="16" height="16" viewBox="0 0 16 16"><rect x="3.5" y="3" width="9" height="9" fill="#f0892a" stroke="#0d0d0d" stroke-width=".8"/><rect x="3.5" y="12" width="9" height="2.5" fill="#0d0d0d"/><rect x="4" y="1.5" width="8" height="1.5" fill="#b85a12"/></svg>
<svg style="position:absolute;left:203.7px;top:200.5px" width="16" height="16" viewBox="0 0 16 16"><rect x="1.5" y="1.5" width="13" height="13" fill="#9b9b9b" stroke="#0d0d0d" stroke-width="1"/><path d="M5 3.5L13 8L5 12.5Z" fill="#e8700f"/><rect x="2.5" y="2.5" width="2" height="11" fill="#777"/></svg>
<svg style="position:absolute;left:230.8px;top:200.5px" width="16" height="16" viewBox="0 0 16 16"><g transform="scale(0.5) translate(-289.5,-97)"><!-- cable tray -->
<g stroke="#0d0d0d" stroke-width="1.8" stroke-linejoin="round" fill="url(#og)">
<path d="M290.2 113.4L302.4 101.3V113.3L290.2 124.5Z"/>
<path d="M290.2 124.5H311.7V113.1H302.4Z"/>
<path d="M310.4 113.1L321.3 102V113.8L311.7 124.5Z"/>
</g>
<g fill="#9a9a9a"><rect x="294.5" y="114" width="1.2" height="4"/><rect x="299" y="109" width="1.2" height="4"/><rect x="313.5" y="114" width="1.2" height="4"/><rect x="318" y="109" width="1.2" height="4"/><rect x="300.5" y="121" width="4" height="1.2"/><circle cx="304" cy="118" r=".8"/><circle cx="307" cy="118" r=".8"/></g>
</g></svg>
<svg style="position:absolute;left:257.5px;top:200.5px" width="16" height="16" viewBox="0 0 16 16"><path d="M2 5L5 2H13V12L10 15H2Z" fill="#8a8a8a" stroke="#0d0d0d" stroke-width="1"/><path d="M2 5H10V15M10 5L13 2" stroke="#555" fill="none"/><text x="3.5" y="13" font-size="8" font-family="Liberation Sans" fill="#0d0d0d">?</text><rect x="12" y="7" width="3" height="3" fill="#19a3ec"/></svg>
<svg style="position:absolute;left:284.5px;top:200.5px" width="16" height="16" viewBox="0 0 16 16"><path d="M2.5 2H9L12.5 5.5V14H2.5Z" fill="#a9a9a9" stroke="#0d0d0d" stroke-width="1"/><rect x="4" y="4" width="4" height="3" fill="#666"/><path d="M5 11H10V9L14 11.5L10 14V12H5Z" fill="#19a3ec" stroke="#0d0d0d" stroke-width=".6"/></svg>
<svg style="position:absolute;left:317.8px;top:200.5px" width="16" height="16" viewBox="0 0 16 16"><rect x="1" y="4" width="14" height="8" fill="#f0892a" stroke="#0d0d0d" stroke-width="1"/><path d="M5 6L7 3H11L9 6Z" fill="#19a3ec"/><rect x="5" y="6" width="4.5" height="7" fill="#19a3ec" stroke="#0d0d0d" stroke-width=".6"/><path d="M6.5 6.5V12.5M8 6.5V12.5" stroke="#0d0d0d" stroke-width=".6"/></svg>
<svg style="position:absolute;left:345.0px;top:200.5px" width="16" height="16" viewBox="0 0 16 16"><rect x="1" y="8" width="4" height="6" fill="#f0892a" stroke="#0d0d0d" stroke-width=".8"/><rect x="11" y="9" width="4" height="5" fill="#f0892a" stroke="#0d0d0d" stroke-width=".8"/><rect x="6.5" y="2" width="4.5" height="5" fill="#19a3ec" stroke="#0d0d0d" stroke-width=".8"/><path d="M8.5 7V13M7 11.5L8.5 13.5L10 11.5" stroke="#0d0d0d" stroke-width="1" fill="none"/></svg>
<svg style="position:absolute;left:372.0px;top:200.5px" width="16" height="16" viewBox="0 0 16 16"><path d="M1.5 13.5H14.5V11.5H9V6.5H14.5V4.5H7V11.5H1.5Z" fill="#f0892a" stroke="#b85a12" stroke-width=".5"/></svg>
<svg style="position:absolute;left:399.0px;top:200.5px" width="16" height="16" viewBox="0 0 16 16"><path d="M1.5 13.5H14.5V11.5H9V6.5H14.5V4.5H7V11.5H1.5Z" fill="#f0892a" stroke="#b85a12" stroke-width=".5"/><path d="M1 10.5V11M1 9V9.5M3 2H4M5 2H6M7 2H8M9 2H10M11 2H12M13 2H14" stroke="#0d0d0d" stroke-width="1"/></svg>
<svg style="position:absolute;left:426.0px;top:200.5px" width="16" height="16" viewBox="0 0 16 16"><rect x="3" y="1" width="3" height="1.5" fill="#19a3ec"/><rect x="7" y="1" width="5" height="1.5" fill="#19a3ec"/><rect x="5" y="0" width="4" height="1.3" fill="#19a3ec"/><path d="M1 6H15" stroke="#19a3ec" stroke-width="1.6" stroke-dasharray="2 1"/><path d="M2 9.5H12V11.5H9V13.5H6V11.5H2Z" fill="#0d0d0d"/><rect x="10" y="11" width="4" height="2.5" fill="#0d0d0d"/></svg>
<svg style="position:absolute;left:453.0px;top:200.5px" width="16" height="16" viewBox="0 0 16 16"><rect x="7" y="1" width="2" height="2" fill="#19a3ec"/><path d="M1 6H15" stroke="#19a3ec" stroke-width="1.6" stroke-dasharray="2 1"/><path d="M2 9.5H12V11.5H9V13.5H6V11.5H2Z" fill="#0d0d0d"/><rect x="10" y="11" width="4" height="2.5" fill="#0d0d0d"/></svg>
<svg style="position:absolute;left:480.0px;top:200.5px" width="16" height="16" viewBox="0 0 16 16"><rect x="1" y="7" width="5" height="6" fill="#aaa" stroke="#555" stroke-width=".8"/><rect x="10" y="7" width="5" height="6" fill="#aaa" stroke="#555" stroke-width=".8"/><path d="M4 14L8 9L7 6L11 2" stroke="#19a3ec" stroke-width="1.3" fill="none"/><path d="M9 2H12V5" stroke="#19a3ec" stroke-width="1.2" fill="none"/></svg>
<svg style="position:absolute;left:513.0px;top:200.5px" width="16" height="16" viewBox="0 0 16 16"><path d="M2 10Q1 6 5 6Q6 3 9 4Q11 5 10 8Q11 10 8 11H3Z" fill="#bbb" stroke="#333" stroke-width=".8"/><path d="M10 2A6 6 0 0 1 8 14" stroke="#19a3ec" stroke-width="1.6" fill="none"/><path d="M4 12V15M6 12V15" stroke="#666" stroke-width=".8" stroke-dasharray="1 1"/></svg>
<svg style="position:absolute;left:540.0px;top:200.5px" width="16" height="16" viewBox="0 0 16 16"><path d="M3 14Q3 6 10 5" stroke="#19a3ec" stroke-width="1.6" fill="none"/><path d="M12 2V9M10.5 2H13.5M10.5 9H13.5M1 13V15M1 14H6M6 13V15" stroke="#0d0d0d" stroke-width="1.3"/></svg>
<svg style="position:absolute;left:567.0px;top:200.5px" width="16" height="16" viewBox="0 0 16 16"><circle cx="8" cy="8" r="6.5" fill="none" stroke="#0d0d0d" stroke-width="1.5"/><path d="M1.5 8A6.5 6.5 0 0 1 8 1.5" stroke="#19a3ec" stroke-width="1.5" fill="none"/><text x="4" y="10.5" font-size="6" font-family="Liberation Sans" fill="#1a3a55">90</text></svg>
<svg style="position:absolute;left:600.0px;top:200.5px" width="16" height="16" viewBox="0 0 16 16"><path d="M3 14L9.5 7.5" stroke="#0d0d0d" stroke-width="3.4" stroke-linecap="round"/><path d="M3 14L9.5 7.5" stroke="#9b9b9b" stroke-width="1.9" stroke-linecap="round"/><path d="M14.41 3.71A4.3 4.3 0 1 1 12.29 1.59L9.79 4.09L11.91 6.21Z" fill="#9b9b9b" stroke="#0d0d0d" stroke-width="1" stroke-linejoin="round"/></svg>
<svg style="position:absolute;left:627.0px;top:200.5px" width="16" height="16" viewBox="0 0 16 16"><path d="M2 14.5L11 5.5" stroke="#0d0d0d" stroke-width="2"/><g fill="#19a3ec"><rect x="10" y="1" width="1" height="1"/><rect x="12" y="2" width="1" height="1"/><rect x="14" y="1" width="1" height="1"/><rect x="13" y="4" width="1" height="1"/><rect x="14" y="6" width="1" height="1"/><rect x="11" y="3" width="1" height="1"/><rect x="12" y="6" width="1" height="1"/></g></svg>
<svg style="position:absolute;left:654.0px;top:200.5px" width="16" height="16" viewBox="0 0 16 16"><rect x="1" y="1" width="5" height="8" fill="#f0892a" stroke="#0d0d0d" stroke-width=".8"/><path d="M1 4H6M1 6.5H6" stroke="#0d0d0d" stroke-width=".6"/><path d="M3.5 14.5L10 8" stroke="#0d0d0d" stroke-width="3.4" stroke-linecap="round"/><path d="M3.5 14.5L10 8" stroke="#9b9b9b" stroke-width="1.9" stroke-linecap="round"/><g transform="translate(0.5,0.5)"><path d="M14.41 3.71A4.3 4.3 0 1 1 12.29 1.59L9.79 4.09L11.91 6.21Z" fill="#9b9b9b" stroke="#0d0d0d" stroke-width="1" stroke-linejoin="round"/></g></svg>
<svg style="position:absolute;left:680.0px;top:200.5px" width="16" height="16" viewBox="0 0 16 16"><path d="M1 9L4 7H12L14 9V13L12 15H1Z" fill="#999" stroke="#0d0d0d" stroke-width=".8"/><path d="M1 11H12L14 9" stroke="#555" fill="none" stroke-width=".8"/><path d="M8 7L10 4" stroke="#0d0d0d" stroke-width="1"/><rect x="8.5" y="1" width="6" height="3.5" fill="#4b8fd4" stroke="#0d0d0d" stroke-width=".8"/></svg>
<svg style="position:absolute;left:709.0px;top:200.5px" width="16" height="16" viewBox="0 0 16 16"><g fill="#f0892a"><rect x="5" y="1.5" width="10" height="2"/><rect x="5" y="5" width="10" height="2"/><rect x="5" y="8.5" width="10" height="2"/><rect x="5" y="12" width="10" height="2"/></g><g fill="#0d0d0d"><circle cx="2.5" cy="2.5" r=".8"/><circle cx="2.5" cy="6" r=".8"/><circle cx="2.5" cy="9.5" r=".8"/><circle cx="2.5" cy="13" r=".8"/></g><text x="5.5" y="13" font-size="13" font-weight="bold" font-family="Liberation Sans" fill="#0d0d0d">P</text></svg>
<svg style="position:absolute;left:736.0px;top:200.5px" width="16" height="16" viewBox="0 0 16 16"><g fill="#f0892a"><rect x="5" y="1.5" width="10" height="2"/><rect x="5" y="5" width="10" height="2"/><rect x="5" y="8.5" width="10" height="2"/><rect x="5" y="12" width="10" height="2"/></g><g fill="#0d0d0d"><circle cx="2.5" cy="2.5" r=".8"/><circle cx="2.5" cy="6" r=".8"/><circle cx="2.5" cy="9.5" r=".8"/><circle cx="2.5" cy="13" r=".8"/></g><text x="5.5" y="13" font-size="13" font-weight="bold" font-family="Liberation Sans" fill="#0d0d0d">A</text></svg>
<svg style="position:absolute;left:762.0px;top:200.5px" width="16" height="16" viewBox="0 0 16 16"><g fill="#19a3ec"><rect x="5" y="1.5" width="10" height="2"/><rect x="5" y="5" width="10" height="2"/><rect x="5" y="8.5" width="10" height="2"/><rect x="5" y="12" width="10" height="2"/></g><g fill="#0d0d0d"><circle cx="2.5" cy="2.5" r=".8"/><circle cx="2.5" cy="6" r=".8"/><circle cx="2.5" cy="9.5" r=".8"/><circle cx="2.5" cy="13" r=".8"/></g></svg>
<svg style="position:absolute;left:801.0px;top:200.5px" width="16" height="16" viewBox="0 0 16 16"><rect x="2" y="2" width="12" height="3" fill="#e3262c"/><rect x="2" y="6" width="4" height="8" fill="#0d0d0d"/><rect x="6" y="9" width="2" height="5" fill="#0d0d0d"/></svg>
<svg style="position:absolute;left:828.0px;top:200.5px" width="16" height="16" viewBox="0 0 16 16"><rect x="2" y="2" width="12" height="3" fill="#0d0d0d"/><rect x="2" y="6" width="4" height="3" fill="#f0892a"/><rect x="2" y="9" width="6" height="5" fill="#0d0d0d"/></svg>
<svg style="position:absolute;left:855.0px;top:200.5px" width="16" height="16" viewBox="0 0 16 16"><rect x="2" y="2" width="12" height="3" fill="#0d0d0d"/><rect x="2" y="5" width="4" height="3" fill="#0d0d0d"/><rect x="2" y="8" width="6" height="6" fill="#19a3ec"/></svg>
<svg style="position:absolute;left:888.0px;top:200.5px" width="16" height="16" viewBox="0 0 16 16"><path d="M3 14L6 8L4 5L8 2" stroke="#9b9b9b" stroke-width="2.2" fill="none"/><rect x="7" y="3" width="7" height="7" transform="rotate(45 10.5 6.5)" fill="#f0892a" stroke="#0d0d0d" stroke-width=".8"/><circle cx="10.5" cy="6.5" r="1.6" fill="#eee"/></svg>
<svg style="position:absolute;left:915.0px;top:200.5px" width="16" height="16" viewBox="0 0 16 16"><rect x="6.5" y="0.5" width="9" height="9" fill="#f2f2f2" stroke="#0d0d0d" stroke-width="1"/><path d="M7 1L15 9M15 1L7 9" stroke="#f0892a" stroke-width="2.4"/><path d="M4.5 1L2.5 6L6 9.5L1.5 15" stroke="#0d0d0d" stroke-width="3" fill="none"/><path d="M4.5 1L2.5 6L6 9.5L1.5 15" stroke="#b8b8b8" stroke-width="1.6" fill="none"/></svg>
<svg style="position:absolute;left:942.0px;top:200.5px" width="16" height="16" viewBox="0 0 16 16"><rect x="1.5" y="2.5" width="13" height="11" fill="#f0892a" stroke="#0d0d0d" stroke-width="1"/><path d="M2 3L6 8L2 13M7.5 2.5V13.5M10 4H13M10 4V6H13V8H10V10H13V12H10" stroke="#0d0d0d" stroke-width="1.1" fill="none"/></svg>
<svg style="position:absolute;left:969.0px;top:200.5px" width="16" height="16" viewBox="0 0 16 16"><rect x="1.5" y="1.5" width="13" height="13" fill="#9b9b9b" stroke="#0d0d0d" stroke-width="1"/><path d="M5 3.5L13 8L5 12.5Z" fill="#e8700f"/><rect x="2.5" y="2.5" width="2" height="11" fill="#777"/></svg>
<svg style="position:absolute;left:1002.0px;top:200.5px" width="16" height="16" viewBox="0 0 16 16"><path d="M3 14L9.5 7.5" stroke="#0d0d0d" stroke-width="3.4" stroke-linecap="round"/><path d="M3 14L9.5 7.5" stroke="#9b9b9b" stroke-width="1.9" stroke-linecap="round"/><path d="M14.41 3.71A4.3 4.3 0 1 1 12.29 1.59L9.79 4.09L11.91 6.21Z" fill="#9b9b9b" stroke="#0d0d0d" stroke-width="1" stroke-linejoin="round"/></svg>
<svg style="position:absolute;left:1034.5px;top:200.5px" width="16" height="16" viewBox="0 0 16 16"><rect x="2" y="2" width="12" height="3" fill="#e3262c"/><rect x="2" y="5" width="4" height="3" fill="#f0892a"/><rect x="2" y="8" width="6" height="6" fill="#19a3ec"/></svg>
<svg style="position:absolute;left:1062.0px;top:200.5px" width="16" height="16" viewBox="0 0 16 16"><g fill="#999"><rect x="5" y="2" width="9" height="1.5"/><rect x="5" y="5.5" width="9" height="1.5"/><rect x="5" y="9" width="4" height="1.5"/><rect x="5" y="12.5" width="4" height="1.5"/></g><rect x="9" y="8" width="6" height="2" fill="#e3262c"/><rect x="9" y="10" width="3" height="4" fill="#19a3ec"/><g fill="#999"><rect x="2" y="2" width="1.5" height="1.5"/><rect x="2" y="5.5" width="1.5" height="1.5"/><rect x="2" y="9" width="1.5" height="1.5"/><rect x="2" y="12.5" width="1.5" height="1.5"/></g></svg>
<svg style="position:absolute;left:1100.0px;top:200.5px" width="16" height="16" viewBox="0 0 16 16"><path d="M3 6L8.5 1L14 6V14.5H3Z" fill="#d4b4c0" stroke="#8a1c3e" stroke-width="1"/><path d="M3.5 7.5H13.5M3.5 9.8H13.5M3.5 12.1H13.5M5 5.3H12" stroke="#8a1c3e" stroke-width="1.1"/><text x="0" y="10" font-size="10" font-weight="bold" font-family="Liberation Sans" fill="#19a3ec">P</text></svg>
<svg style="position:absolute;left:1127.5px;top:200.5px" width="16" height="16" viewBox="0 0 16 16"><path d="M3 6L8.5 1L14 6V14.5H3Z" fill="#d4b4c0" stroke="#8a1c3e" stroke-width="1"/><path d="M3.5 7.5H13.5M3.5 9.8H13.5M3.5 12.1H13.5M5 5.3H12" stroke="#8a1c3e" stroke-width="1.1"/><path d="M3 6V14M3 6L7 2" stroke="#19a3ec" stroke-width="1.6" fill="none"/></svg>
<svg style="position:absolute;left:1154.5px;top:200.5px" width="16" height="16" viewBox="0 0 16 16"><path d="M3 6L8.5 1L14 6V14.5H3Z" fill="#d4b4c0" stroke="#8a1c3e" stroke-width="1"/><path d="M3.5 7.5H13.5M3.5 9.8H13.5M3.5 12.1H13.5M5 5.3H12" stroke="#8a1c3e" stroke-width="1.1"/><path d="M1 14V9H5" stroke="#19a3ec" stroke-width="1.6" fill="none"/></svg>
<svg style="position:absolute;left:1181.7px;top:200.5px" width="16" height="16" viewBox="0 0 16 16"><path d="M1.5 1.5H14.5V14.5H1.5Z" fill="#19a3ec" stroke="#0d0d0d" stroke-width=".8"/><rect x="4" y="2.5" width="8" height="4.5" fill="#ddd"/><path d="M5 4H11M5 5.5H11" stroke="#555" stroke-width=".7"/><rect x="5" y="10" width="6" height="4" fill="#ddd"/><rect x="6" y="11" width="2" height="3" fill="#0d0d0d"/></svg>
<svg style="position:absolute;left:1208.7px;top:200.5px" width="16" height="16" viewBox="0 0 16 16"><rect x="1.5" y="1.5" width="13" height="13" fill="#19a3ec" stroke="#0d0d0d" stroke-width="1"/><path d="M5 5L11 11M11 5L5 11" stroke="#8a1c3e" stroke-width="1.3"/></svg>
<svg style="position:absolute;left:1242.0px;top:200.5px" width="16" height="16" viewBox="0 0 16 16"><path d="M3 6L8.5 1L14 6V14.5H3Z" fill="#d4b4c0" stroke="#8a1c3e" stroke-width="1"/><path d="M3.5 7.5H13.5M3.5 9.8H13.5M3.5 12.1H13.5M5 5.3H12" stroke="#8a1c3e" stroke-width="1.1"/><path d="M0.5 8H4" stroke="#19a3ec" stroke-width="1.3"/><rect x="4" y="9" width="10" height="2" fill="#4b8fd4"/></svg>
<svg style="position:absolute;left:1269.0px;top:200.5px" width="16" height="16" viewBox="0 0 16 16"><path d="M3 6L8.5 1L14 6V14.5H3Z" fill="#d4b4c0" stroke="#8a1c3e" stroke-width="1"/><path d="M3.5 7.5H13.5M3.5 9.8H13.5M3.5 12.1H13.5M5 5.3H12" stroke="#8a1c3e" stroke-width="1.1"/><path d="M8.5 0V15" stroke="#19a3ec" stroke-width="1.5"/></svg>
<svg style="position:absolute;left:1296.0px;top:200.5px" width="16" height="16" viewBox="0 0 16 16"><path d="M3 6L8.5 1L14 6V14.5H3Z" fill="#d4b4c0" stroke="#8a1c3e" stroke-width="1"/><path d="M3.5 7.5H13.5M3.5 9.8H13.5M3.5 12.1H13.5M5 5.3H12" stroke="#8a1c3e" stroke-width="1.1"/><path d="M4 13Q1 13 1 10Q1 8 4 8" stroke="#19a3ec" stroke-width="1.3" fill="none"/><rect x="4" y="11" width="10" height="2" fill="#4b8fd4"/></svg>
<svg style="position:absolute;left:1323.0px;top:200.5px" width="16" height="16" viewBox="0 0 16 16"><path d="M3 6L8.5 1L14 6V14.5H3Z" fill="#d4b4c0" stroke="#8a1c3e" stroke-width="1"/><path d="M3.5 7.5H13.5M3.5 9.8H13.5M3.5 12.1H13.5M5 5.3H12" stroke="#8a1c3e" stroke-width="1.1"/><rect x="8" y="0.5" width="7" height="6" fill="#19a3ec" stroke="#0d0d0d" stroke-width=".5"/><path d="M10.3 0.5V6.5M12.6 0.5V6.5M8 2.5H15M8 4.5H15" stroke="#0d0d0d" stroke-width=".4"/></svg>
<svg style="position:absolute;left:1356.6px;top:200.5px" width="16" height="16" viewBox="0 0 16 16"><g fill="#8a1c3e"><rect x="5" y="1.5" width="10" height="2"/><rect x="5" y="5" width="10" height="2"/><rect x="5" y="8.5" width="10" height="2"/><rect x="5" y="12" width="10" height="2"/></g><rect x="1.5" y="2" width="1.8" height="8" fill="#19a3ec"/><rect x="1.5" y="12" width="1.8" height="2" fill="#19a3ec"/></svg>
<svg style="position:absolute;left:1395.0px;top:200.5px" width="16" height="16" viewBox="0 0 16 16"><rect x="1" y="4" width="1.3" height="8" fill="#0d0d0d"/><rect x="13.7" y="4" width="1.3" height="8" fill="#0d0d0d"/><path d="M2 5H14M2 11H14" stroke="#888" stroke-width="1.2"/><path d="M2.5 8H14" stroke="#19a3ec" stroke-width="1.3" stroke-dasharray="2 1.2"/></svg>
<svg style="position:absolute;left:1421.0px;top:200.5px" width="16" height="16" viewBox="0 0 16 16"><path d="M2 6L5 4H14V10L11 12H2Z" fill="#777" stroke="#0d0d0d" stroke-width=".8"/><path d="M3 8.5H10" stroke="#19a3ec" stroke-width="1.2" stroke-dasharray="1.5 1"/></svg>
<svg style="position:absolute;left:1455.0px;top:200.5px" width="16" height="16" viewBox="0 0 16 16"><path d="M1.5 4.5L4 2H8.5V6.5L6 9H1.5Z" fill="#2a2a2a" stroke="#0d0d0d" stroke-width="1"/><path d="M3 7L6 4M4 5H7" stroke="#19a3ec" stroke-width="1"/><path d="M11 4.5L7.5 13.5H14.5Z" fill="none" stroke="#0d0d0d" stroke-width="1.1"/><ellipse cx="11" cy="13.3" rx="3.3" ry="1.5" fill="none" stroke="#0d0d0d" stroke-width="1"/><path d="M8.5 12.5H13.5" stroke="#19a3ec" stroke-width="1.2"/></svg>
<svg style="position:absolute;left:1482.0px;top:200.5px" width="16" height="16" viewBox="0 0 16 16"><path d="M1.5 5.5L5.5 1.5H14.5V10.5L10.5 14.5H1.5Z" fill="none" stroke="#19a3ec" stroke-width="1.3"/><path d="M1.5 5.5H10.5V14.5M10.5 5.5L14.5 1.5" stroke="#19a3ec" stroke-width="1.2" fill="none"/></svg>
<svg style="position:absolute;left:1508.7px;top:200.5px" width="16" height="16" viewBox="0 0 16 16"><path d="M1.5 5.5L5.5 1.5H14.5V10.5L10.5 14.5H1.5Z" fill="#19a3ec" stroke="#0d0d0d" stroke-width="1.3"/><path d="M1.5 5.5H10.5V14.5M10.5 5.5L14.5 1.5" stroke="#0d0d0d" stroke-width="1.1" fill="none"/></svg>
<svg style="position:absolute;left:1535.8px;top:200.5px" width="16" height="16" viewBox="0 0 16 16"><defs><radialGradient id="sg" cx="35%" cy="30%" r="70%"><stop offset="0" stop-color="#bfe8ff"/><stop offset=".5" stop-color="#22a8f0"/><stop offset="1" stop-color="#0a7cc4"/></radialGradient></defs><circle cx="8" cy="8" r="7" fill="url(#sg)"/></svg>
<svg style="position:absolute;left:1568.7px;top:200.5px" width="16" height="16" viewBox="0 0 16 16"><g transform="scale(0.5) translate(-892,-97)"><!-- orbit -->
<ellipse cx="908" cy="113" rx="15.5" ry="4.2" transform="rotate(18 908 113)" fill="none" stroke="#2e2e2e" stroke-width="2.2"/>
<ellipse cx="908.5" cy="112.5" rx="15" ry="4.2" transform="rotate(-68 908.5 112.5)" fill="none" stroke="#2e2e2e" stroke-width="2.2"/>
<circle cx="907.8" cy="113.1" r="11.6" fill="url(#bsph)"/>
<path d="M893.3 108.2A15.5 4.2 18 0 1 922.7 117.8" fill="none" stroke="#3c3c3c" stroke-width="2.4"/>
<path d="M914.1 98.6A15 4.2 -68 0 1 902.9 126.4" fill="none" stroke="#3c3c3c" stroke-width="2.4"/>
<path d="M900 106L906 103.5L904.5 109.5Z" fill="#3c3c3c"/>
</g></svg>
<svg style="position:absolute;left:15.0px;top:231.0px" width="16" height="16" viewBox="0 0 16 16"><path d="M1.5 13.5H14.5V11.5H9V6.5H14.5V4.5H7V11.5H1.5Z" fill="#f0892a"/></svg>
<svg style="position:absolute;left:42.0px;top:231.0px" width="16" height="16" viewBox="0 0 16 16"><rect x="1.5" y="2" width="13" height="2" fill="#4b8fd4"/><rect x="7" y="4" width="2" height="7" fill="#c0306a"/><rect x="1.5" y="11" width="13" height="2.5" fill="#e3262c"/></svg>
<svg style="position:absolute;left:69.0px;top:231.0px" width="16" height="16" viewBox="0 0 16 16"><path d="M2 14V2H14V4.5H5V6H14V8H5V10H14" fill="none" stroke="#e3262c" stroke-width="1.8"/><rect x="2" y="10" width="12" height="1.7" fill="#4b8fd4"/><rect x="2" y="12.3" width="12" height="1.7" fill="#4b8fd4"/><rect x="5" y="6" width="9" height="2" fill="#4b8fd4"/></svg>
<svg style="position:absolute;left:102.0px;top:231.0px" width="16" height="16" viewBox="0 0 16 16"><rect x="1.5" y="1.5" width="13" height="13" fill="#4b8fd4" stroke="#0d0d0d" stroke-width="1"/><path d="M3 9L5 4L7 9M7 9L9 4L11 9M11 9L13 4" fill="#ccc" stroke="#0d0d0d" stroke-width=".6"/><rect x="1.5" y="10.5" width="13" height="4" fill="#333"/></svg>
<svg style="position:absolute;left:129.0px;top:231.0px" width="16" height="16" viewBox="0 0 16 16"><rect x="4.5" y="2" width="6" height="12" rx="1.5" fill="#4b8fd4" stroke="#0d0d0d" stroke-width=".8"/><circle cx="3.5" cy="12.5" r="2" fill="#4b8fd4" stroke="#0d0d0d" stroke-width=".6"/><rect x="12.5" y="5" width="1.5" height="1.5" fill="#e3262c"/><rect x="12.5" y="10" width="1.5" height="1.5" fill="#19a3ec"/></svg>
<svg style="position:absolute;left:155.0px;top:231.0px" width="16" height="16" viewBox="0 0 16 16"><rect x="5" y="5" width="6" height="10" rx="3" fill="#e3262c" stroke="#0d0d0d" stroke-width=".8"/><path d="M5 10H11" stroke="#0d0d0d" stroke-width=".6"/><path d="M8 5V2H11" stroke="#0d0d0d" stroke-width="1" fill="none"/></svg>
<svg style="position:absolute;left:183.0px;top:231.0px" width="16" height="16" viewBox="0 0 16 16"><circle cx="8" cy="9" r="5.5" fill="#4b8fd4" stroke="#0d0d0d" stroke-width=".8"/><path d="M5.5 5.5L12.5 9L5.5 12.5Z" fill="#e3262c"/><rect x="6" y="1" width="4" height="3" fill="#4b8fd4" stroke="#0d0d0d" stroke-width=".6"/><path d="M1 7V11M15 7V11" stroke="#0d0d0d" stroke-width="1.4"/></svg>
<svg style="position:absolute;left:210.0px;top:231.0px" width="16" height="16" viewBox="0 0 16 16"><rect x="1" y="7" width="5" height="2" fill="#4b8fd4"/><rect x="6" y="4.5" width="4" height="7" fill="#e3262c" stroke="#7a0a0a" stroke-width=".6"/><rect x="10" y="5" width="5" height="6" fill="#4b8fd4" stroke="#2a4a6a" stroke-width=".6"/></svg>
<svg style="position:absolute;left:236.7px;top:231.0px" width="16" height="16" viewBox="0 0 16 16"><path d="M2 2L6 6L10 2V6L6 2Z" fill="#0d0d0d"/><path d="M6 6V1" stroke="#e3262c" stroke-width="1"/><path d="M8 5Q12 5 13 10" stroke="#e3262c" stroke-width="1.3" fill="none"/><rect x="1" y="13" width="14" height="2" fill="#4b8fd4"/><path d="M1 12H6" stroke="#666" stroke-width=".8"/></svg>
<svg style="position:absolute;left:264.0px;top:231.0px" width="16" height="16" viewBox="0 0 16 16"><rect x="1" y="7" width="5" height="2" fill="#4b8fd4"/><rect x="6" y="4.5" width="4" height="7" fill="#e3262c" stroke="#7a0a0a" stroke-width=".6"/><rect x="10" y="5" width="5" height="6" fill="#4b8fd4" stroke="#2a4a6a" stroke-width=".6"/></svg>
<svg style="position:absolute;left:291.0px;top:231.0px" width="16" height="16" viewBox="0 0 16 16"><path d="M2 5L5 2H13V12L10 15H2Z" fill="#8a8a8a" stroke="#0d0d0d" stroke-width="1"/><path d="M2 5H10V15M10 5L13 2" stroke="#555" fill="none"/><text x="3.5" y="13" font-size="8" font-family="Liberation Sans" fill="#0d0d0d">?</text><rect x="12" y="7" width="3" height="3" fill="#19a3ec"/></svg>
<svg style="position:absolute;left:317.8px;top:231.0px" width="16" height="16" viewBox="0 0 16 16"><path d="M2.5 2H9L12.5 5.5V14H2.5Z" fill="#a9a9a9" stroke="#0d0d0d" stroke-width="1"/><rect x="4" y="4" width="4" height="3" fill="#666"/><path d="M5 11H10V9L14 11.5L10 14V12H5Z" fill="#19a3ec" stroke="#0d0d0d" stroke-width=".6"/></svg>
<svg style="position:absolute;left:351.0px;top:231.0px" width="16" height="16" viewBox="0 0 16 16"><rect x="1" y="4" width="14" height="8" rx="2" fill="#4b8fd4" stroke="#1c3a5c" stroke-width=".8"/><path d="M3.5 4V12M6 4V12M8.5 4V12M11 4V12M13 4V12" stroke="#1c3a5c" stroke-width=".7"/></svg>
<svg style="position:absolute;left:378.0px;top:231.0px" width="16" height="16" viewBox="0 0 16 16"><rect x="3" y="1" width="3" height="1.5" fill="#19a3ec"/><rect x="7" y="1" width="5" height="1.5" fill="#19a3ec"/><rect x="5" y="0" width="4" height="1.3" fill="#19a3ec"/><path d="M1 6H15" stroke="#19a3ec" stroke-width="1.6" stroke-dasharray="2 1"/><path d="M2 9.5H12V11.5H9V13.5H6V11.5H2Z" fill="#0d0d0d"/><rect x="10" y="11" width="4" height="2.5" fill="#0d0d0d"/></svg>
<svg style="position:absolute;left:405.0px;top:231.0px" width="16" height="16" viewBox="0 0 16 16"><rect x="7" y="1" width="2" height="2" fill="#19a3ec"/><path d="M1 6H15" stroke="#19a3ec" stroke-width="1.6" stroke-dasharray="2 1"/><path d="M2 9.5H12V11.5H9V13.5H6V11.5H2Z" fill="#0d0d0d"/><rect x="10" y="11" width="4" height="2.5" fill="#0d0d0d"/></svg>
<svg style="position:absolute;left:432.0px;top:231.0px" width="16" height="16" viewBox="0 0 16 16"><rect x="1" y="7" width="5" height="6" fill="#aaa" stroke="#555" stroke-width=".8"/><rect x="10" y="7" width="5" height="6" fill="#aaa" stroke="#555" stroke-width=".8"/><path d="M4 14L8 9L7 6L11 2" stroke="#19a3ec" stroke-width="1.3" fill="none"/><path d="M9 2H12V5" stroke="#19a3ec" stroke-width="1.2" fill="none"/></svg>
<svg style="position:absolute;left:465.0px;top:231.0px" width="16" height="16" viewBox="0 0 16 16"><path d="M2 10Q1 6 5 6Q6 3 9 4Q11 5 10 8Q11 10 8 11H3Z" fill="#bbb" stroke="#333" stroke-width=".8"/><path d="M10 2A6 6 0 0 1 8 14" stroke="#19a3ec" stroke-width="1.6" fill="none"/><path d="M4 12V15M6 12V15" stroke="#666" stroke-width=".8" stroke-dasharray="1 1"/></svg>
<svg style="position:absolute;left:492.0px;top:231.0px" width="16" height="16" viewBox="0 0 16 16"><path d="M3 14Q3 6 10 5" stroke="#19a3ec" stroke-width="1.6" fill="none"/><path d="M12 2V9M10.5 2H13.5M10.5 9H13.5M1 13V15M1 14H6M6 13V15" stroke="#0d0d0d" stroke-width="1.3"/></svg>
<svg style="position:absolute;left:519.0px;top:231.0px" width="16" height="16" viewBox="0 0 16 16"><circle cx="8" cy="8" r="6.5" fill="none" stroke="#0d0d0d" stroke-width="1.5"/><path d="M1.5 8A6.5 6.5 0 0 1 8 1.5" stroke="#19a3ec" stroke-width="1.5" fill="none"/><text x="4" y="10.5" font-size="6" font-family="Liberation Sans" fill="#1a3a55">90</text></svg>
<svg style="position:absolute;left:552.0px;top:231.0px" width="16" height="16" viewBox="0 0 16 16"><path d="M3 14L9.5 7.5" stroke="#0d0d0d" stroke-width="3.4" stroke-linecap="round"/><path d="M3 14L9.5 7.5" stroke="#9b9b9b" stroke-width="1.9" stroke-linecap="round"/><path d="M14.41 3.71A4.3 4.3 0 1 1 12.29 1.59L9.79 4.09L11.91 6.21Z" fill="#9b9b9b" stroke="#0d0d0d" stroke-width="1" stroke-linejoin="round"/></svg>
<svg style="position:absolute;left:579.0px;top:231.0px" width="16" height="16" viewBox="0 0 16 16"><path d="M2 14.5L11 5.5" stroke="#0d0d0d" stroke-width="2"/><g fill="#19a3ec"><rect x="10" y="1" width="1" height="1"/><rect x="12" y="2" width="1" height="1"/><rect x="14" y="1" width="1" height="1"/><rect x="13" y="4" width="1" height="1"/><rect x="14" y="6" width="1" height="1"/><rect x="11" y="3" width="1" height="1"/><rect x="12" y="6" width="1" height="1"/></g></svg>
<svg style="position:absolute;left:605.0px;top:231.0px" width="16" height="16" viewBox="0 0 16 16"><rect x="1" y="1" width="5" height="8" fill="#4b8fd4" stroke="#0d0d0d" stroke-width=".8"/><path d="M1 4H6M1 6.5H6" stroke="#0d0d0d" stroke-width=".6"/><path d="M3.5 14.5L10 8" stroke="#0d0d0d" stroke-width="3.4" stroke-linecap="round"/><path d="M3.5 14.5L10 8" stroke="#9b9b9b" stroke-width="1.9" stroke-linecap="round"/><g transform="translate(0.5,0.5)"><path d="M14.41 3.71A4.3 4.3 0 1 1 12.29 1.59L9.79 4.09L11.91 6.21Z" fill="#9b9b9b" stroke="#0d0d0d" stroke-width="1" stroke-linejoin="round"/></g></svg>
<svg style="position:absolute;left:633.0px;top:231.0px" width="16" height="16" viewBox="0 0 16 16"><path d="M1 9L4 7H12L14 9V13L12 15H1Z" fill="#999" stroke="#0d0d0d" stroke-width=".8"/><path d="M1 11H12L14 9" stroke="#555" fill="none" stroke-width=".8"/><path d="M8 7L10 4" stroke="#0d0d0d" stroke-width="1"/><rect x="8.5" y="1" width="6" height="3.5" fill="#4b8fd4" stroke="#0d0d0d" stroke-width=".8"/></svg>
<svg style="position:absolute;left:660.0px;top:231.0px" width="16" height="16" viewBox="0 0 16 16"><g fill="#4b8fd4"><rect x="5" y="1.5" width="10" height="2"/><rect x="5" y="5" width="10" height="2"/><rect x="5" y="8.5" width="10" height="2"/><rect x="5" y="12" width="10" height="2"/></g><g fill="#0d0d0d"><circle cx="2.5" cy="2.5" r=".8"/><circle cx="2.5" cy="6" r=".8"/><circle cx="2.5" cy="9.5" r=".8"/><circle cx="2.5" cy="13" r=".8"/></g><text x="5.5" y="13" font-size="13" font-weight="bold" font-family="Liberation Sans" fill="#0d0d0d">P</text></svg>
<svg style="position:absolute;left:687.0px;top:231.0px" width="16" height="16" viewBox="0 0 16 16"><g fill="#19a3ec"><rect x="5" y="1.5" width="10" height="2"/><rect x="5" y="5" width="10" height="2"/><rect x="5" y="8.5" width="10" height="2"/><rect x="5" y="12" width="10" height="2"/></g><g fill="#0d0d0d"><circle cx="2.5" cy="2.5" r=".8"/><circle cx="2.5" cy="6" r=".8"/><circle cx="2.5" cy="9.5" r=".8"/><circle cx="2.5" cy="13" r=".8"/></g></svg>
<svg style="position:absolute;left:726.0px;top:231.0px" width="16" height="16" viewBox="0 0 16 16"><path d="M1.5 13.5H14.5V11.5H9V6.5H14.5V4.5H7V11.5H1.5Z" fill="#8ccc3f" stroke="#4f8f1e" stroke-width=".6"/></svg>
<svg style="position:absolute;left:753.0px;top:231.0px" width="16" height="16" viewBox="0 0 16 16"><rect x="1.5" y="2" width="13" height="2" fill="#8ccc3f"/><rect x="7" y="4" width="2" height="7" fill="#d8a020"/><rect x="1.5" y="11" width="13" height="2.5" fill="#e3262c"/></svg>
<svg style="position:absolute;left:780.0px;top:231.0px" width="16" height="16" viewBox="0 0 16 16"><path d="M2 14V2H14V4.5H5V6H14V8H5V10H14" fill="none" stroke="#e3262c" stroke-width="1.8"/><rect x="2" y="10" width="12" height="1.7" fill="#8ccc3f"/><rect x="2" y="12.3" width="12" height="1.7" fill="#8ccc3f"/><rect x="5" y="6" width="9" height="2" fill="#8ccc3f"/></svg>
<svg style="position:absolute;left:813.0px;top:231.0px" width="16" height="16" viewBox="0 0 16 16"><path d="M1 8H15Q14 14 8 14Q2 14 1 8Z" fill="#8ccc3f" stroke="#0d0d0d" stroke-width=".8"/><path d="M8 8V3H10" stroke="#0d0d0d" stroke-width="1" fill="none"/></svg>
<svg style="position:absolute;left:840.0px;top:231.0px" width="16" height="16" viewBox="0 0 16 16"><rect x="3" y="1" width="1.6" height="14" fill="#0d0d0d"/><path d="M4.5 8H14Q13 14 8 14H4.5Z" fill="#8ccc3f" stroke="#0d0d0d" stroke-width=".8"/></svg>
<svg style="position:absolute;left:867.0px;top:231.0px" width="16" height="16" viewBox="0 0 16 16"><path d="M12 15V4Q12 1 9 1Q6 1 6 5" stroke="#0d0d0d" stroke-width="1.1" fill="none"/><path d="M3 8Q6 4 9 8Z" fill="#8ccc3f"/><path d="M3.5 10V15M5 10V15M6.5 10V15M8 10V15" stroke="#666" stroke-width=".6" stroke-dasharray="1 1"/></svg>
<svg style="position:absolute;left:894.0px;top:231.0px" width="16" height="16" viewBox="0 0 16 16"><path d="M1 7H15V8Q14 13 8 13Q2 13 1 8Z" fill="#8ccc3f" stroke="#0d0d0d" stroke-width=".8"/><path d="M3 13V15M13 13V15M3 7V4H5" stroke="#0d0d0d" stroke-width="1" fill="none"/></svg>
<svg style="position:absolute;left:921.0px;top:231.0px" width="16" height="16" viewBox="0 0 16 16"><rect x="1" y="8" width="14" height="3" fill="#8ccc3f" stroke="#0d0d0d" stroke-width=".8"/><path d="M8 8V2M5 4Q8 1 11 4" stroke="#0d0d0d" stroke-width="1" fill="none"/><path d="M2 11V15M14 11V15M6 11Q8 14 10 11" stroke="#0d0d0d" stroke-width=".9" fill="none"/></svg>
<svg style="position:absolute;left:948.0px;top:231.0px" width="16" height="16" viewBox="0 0 16 16"><path d="M2 2H6V4H14V2" stroke="#0d0d0d" stroke-width=".6" fill="none"/><path d="M4 3Q4 7 8 7V13H14" stroke="#8ccc3f" stroke-width="2.4" fill="none"/><path d="M12 3V7" stroke="#8ccc3f" stroke-width="2.2"/></svg>
<svg style="position:absolute;left:975.0px;top:231.0px" width="16" height="16" viewBox="0 0 16 16"><rect x="5" y="5" width="6" height="10" rx="3" fill="#8ccc3f" stroke="#0d0d0d" stroke-width=".8"/><path d="M5 10H11" stroke="#0d0d0d" stroke-width=".6"/><path d="M8 5V2H11" stroke="#0d0d0d" stroke-width="1" fill="none"/></svg>
<svg style="position:absolute;left:1002.0px;top:231.0px" width="16" height="16" viewBox="0 0 16 16"><rect x="3" y="2" width="9" height="12" rx="1" fill="#aaa" stroke="#0d0d0d" stroke-width=".8"/><rect x="4.5" y="3.5" width="6" height="9" fill="#e86a5a"/><rect x="4.5" y="8" width="6" height="4.5" fill="#19a3ec"/><rect x="4.5" y="6" width="6" height="3" fill="#8ccc3f"/><rect x="13" y="4" width="1.5" height="1.5" fill="#e3262c"/><rect x="13" y="11" width="1.5" height="1.5" fill="#19a3ec"/></svg>
<svg style="position:absolute;left:1029.0px;top:231.0px" width="16" height="16" viewBox="0 0 16 16"><ellipse cx="8" cy="10" rx="5.5" ry="4" fill="#8ccc3f" stroke="#0d0d0d" stroke-width=".8"/><path d="M1 8V12M15 8V12" stroke="#0d0d0d" stroke-width="1.5"/><path d="M8 6V3M6 3L12 2" stroke="#0d0d0d" stroke-width="1.3"/></svg>
<svg style="position:absolute;left:1056.0px;top:231.0px" width="16" height="16" viewBox="0 0 16 16"><path d="M5 1L8 5L11 1Z" fill="#0d0d0d"/><path d="M8 5V1" stroke="#e3262c" stroke-width="1"/><path d="M9 4Q13 4 14 10" stroke="#e3262c" stroke-width="1.3" fill="none"/><rect x="1" y="13" width="14" height="2" fill="#8ccc3f"/><path d="M1 11H8" stroke="#999" stroke-width="1"/></svg>
<svg style="position:absolute;left:1083.0px;top:231.0px" width="16" height="16" viewBox="0 0 16 16"><rect x="1" y="7" width="5" height="2" fill="#8ccc3f"/><rect x="6" y="4.5" width="4" height="7" fill="#e3262c" stroke="#7a0a0a" stroke-width=".6"/><rect x="10" y="5" width="5" height="6" fill="#8ccc3f" stroke="#4f8f1e" stroke-width=".6"/></svg>
<svg style="position:absolute;left:1109.5px;top:231.0px" width="16" height="16" viewBox="0 0 16 16"><circle cx="8" cy="9" r="5.5" fill="#8ccc3f" stroke="#0d0d0d" stroke-width=".8"/><path d="M5.5 5.5L12.5 9L5.5 12.5Z" fill="#e3262c"/><rect x="6" y="1" width="4" height="3" fill="#8ccc3f" stroke="#0d0d0d" stroke-width=".6"/><path d="M1 7V11M15 7V11" stroke="#0d0d0d" stroke-width="1.4"/></svg>
<svg style="position:absolute;left:1142.0px;top:231.0px" width="16" height="16" viewBox="0 0 16 16"><path d="M2 5L5 2H13V12L10 15H2Z" fill="#8a8a8a" stroke="#0d0d0d" stroke-width="1"/><path d="M2 5H10V15M10 5L13 2" stroke="#555" fill="none"/><text x="3.5" y="13" font-size="8" font-family="Liberation Sans" fill="#0d0d0d">?</text><rect x="12" y="7" width="3" height="3" fill="#19a3ec"/></svg>
<svg style="position:absolute;left:1169.0px;top:231.0px" width="16" height="16" viewBox="0 0 16 16"><path d="M2.5 2H9L12.5 5.5V14H2.5Z" fill="#a9a9a9" stroke="#0d0d0d" stroke-width="1"/><rect x="4" y="4" width="4" height="3" fill="#666"/><path d="M5 11H10V9L14 11.5L10 14V12H5Z" fill="#19a3ec" stroke="#0d0d0d" stroke-width=".6"/></svg>
<svg style="position:absolute;left:1203.0px;top:231.0px" width="16" height="16" viewBox="0 0 16 16"><rect x="1" y="4" width="14" height="8" rx="2" fill="#8ccc3f" stroke="#1c3a10" stroke-width=".8"/><path d="M3.5 4V12M6 4V12M8.5 4V12M11 4V12M13 4V12" stroke="#2a5a10" stroke-width=".7"/></svg>
<svg style="position:absolute;left:1230.0px;top:231.0px" width="16" height="16" viewBox="0 0 16 16"><rect x="3" y="1" width="3" height="1.5" fill="#19a3ec"/><rect x="7" y="1" width="5" height="1.5" fill="#19a3ec"/><rect x="5" y="0" width="4" height="1.3" fill="#19a3ec"/><path d="M1 6H15" stroke="#19a3ec" stroke-width="1.6" stroke-dasharray="2 1"/><path d="M2 9.5H12V11.5H9V13.5H6V11.5H2Z" fill="#0d0d0d"/><rect x="10" y="11" width="4" height="2.5" fill="#0d0d0d"/></svg>
<svg style="position:absolute;left:1257.0px;top:231.0px" width="16" height="16" viewBox="0 0 16 16"><rect x="7" y="1" width="2" height="2" fill="#19a3ec"/><path d="M1 6H15" stroke="#19a3ec" stroke-width="1.6" stroke-dasharray="2 1"/><path d="M2 9.5H12V11.5H9V13.5H6V11.5H2Z" fill="#0d0d0d"/><rect x="10" y="11" width="4" height="2.5" fill="#0d0d0d"/></svg>
<svg style="position:absolute;left:1284.0px;top:231.0px" width="16" height="16" viewBox="0 0 16 16"><rect x="1" y="7" width="5" height="6" fill="#aaa" stroke="#555" stroke-width=".8"/><rect x="10" y="7" width="5" height="6" fill="#aaa" stroke="#555" stroke-width=".8"/><path d="M4 14L8 9L7 6L11 2" stroke="#19a3ec" stroke-width="1.3" fill="none"/><path d="M9 2H12V5" stroke="#19a3ec" stroke-width="1.2" fill="none"/></svg>
<svg style="position:absolute;left:1317.0px;top:231.0px" width="16" height="16" viewBox="0 0 16 16"><path d="M2 10Q1 6 5 6Q6 3 9 4Q11 5 10 8Q11 10 8 11H3Z" fill="#bbb" stroke="#333" stroke-width=".8"/><path d="M10 2A6 6 0 0 1 8 14" stroke="#19a3ec" stroke-width="1.6" fill="none"/><path d="M4 12V15M6 12V15" stroke="#666" stroke-width=".8" stroke-dasharray="1 1"/></svg>
<svg style="position:absolute;left:1344.0px;top:231.0px" width="16" height="16" viewBox="0 0 16 16"><path d="M3 14Q3 6 10 5" stroke="#19a3ec" stroke-width="1.6" fill="none"/><path d="M12 2V9M10.5 2H13.5M10.5 9H13.5M1 13V15M1 14H6M6 13V15" stroke="#0d0d0d" stroke-width="1.3"/></svg>
<svg style="position:absolute;left:1371.0px;top:231.0px" width="16" height="16" viewBox="0 0 16 16"><circle cx="8" cy="8" r="6.5" fill="none" stroke="#0d0d0d" stroke-width="1.5"/><path d="M1.5 8A6.5 6.5 0 0 1 8 1.5" stroke="#19a3ec" stroke-width="1.5" fill="none"/><text x="4" y="10.5" font-size="6" font-family="Liberation Sans" fill="#1a3a55">90</text></svg>
<svg style="position:absolute;left:1403.5px;top:231.0px" width="16" height="16" viewBox="0 0 16 16"><path d="M3 14L9.5 7.5" stroke="#0d0d0d" stroke-width="3.4" stroke-linecap="round"/><path d="M3 14L9.5 7.5" stroke="#9b9b9b" stroke-width="1.9" stroke-linecap="round"/><path d="M14.41 3.71A4.3 4.3 0 1 1 12.29 1.59L9.79 4.09L11.91 6.21Z" fill="#9b9b9b" stroke="#0d0d0d" stroke-width="1" stroke-linejoin="round"/></svg>
<svg style="position:absolute;left:1431.0px;top:231.0px" width="16" height="16" viewBox="0 0 16 16"><path d="M2 14.5L11 5.5" stroke="#0d0d0d" stroke-width="2"/><g fill="#19a3ec"><rect x="10" y="1" width="1" height="1"/><rect x="12" y="2" width="1" height="1"/><rect x="14" y="1" width="1" height="1"/><rect x="13" y="4" width="1" height="1"/><rect x="14" y="6" width="1" height="1"/><rect x="11" y="3" width="1" height="1"/><rect x="12" y="6" width="1" height="1"/></g></svg>
<svg style="position:absolute;left:1458.0px;top:231.0px" width="16" height="16" viewBox="0 0 16 16"><rect x="1" y="1" width="5" height="8" fill="#8ccc3f" stroke="#0d0d0d" stroke-width=".8"/><path d="M1 4H6M1 6.5H6" stroke="#0d0d0d" stroke-width=".6"/><path d="M3.5 14.5L10 8" stroke="#0d0d0d" stroke-width="3.4" stroke-linecap="round"/><path d="M3.5 14.5L10 8" stroke="#9b9b9b" stroke-width="1.9" stroke-linecap="round"/><g transform="translate(0.5,0.5)"><path d="M14.41 3.71A4.3 4.3 0 1 1 12.29 1.59L9.79 4.09L11.91 6.21Z" fill="#9b9b9b" stroke="#0d0d0d" stroke-width="1" stroke-linejoin="round"/></g></svg>
<svg style="position:absolute;left:1485.0px;top:231.0px" width="16" height="16" viewBox="0 0 16 16"><path d="M1 9L4 7H12L14 9V13L12 15H1Z" fill="#999" stroke="#0d0d0d" stroke-width=".8"/><path d="M1 11H12L14 9" stroke="#555" fill="none" stroke-width=".8"/><path d="M8 7L10 4" stroke="#0d0d0d" stroke-width="1"/><rect x="8.5" y="1" width="6" height="3.5" fill="#8ccc3f" stroke="#0d0d0d" stroke-width=".8"/></svg>
<svg style="position:absolute;left:1512.0px;top:231.0px" width="16" height="16" viewBox="0 0 16 16"><g fill="#19a3ec"><rect x="5" y="1.5" width="10" height="2"/><rect x="5" y="5" width="10" height="2"/><rect x="5" y="8.5" width="10" height="2"/><rect x="5" y="12" width="10" height="2"/></g><g fill="#0d0d0d"><circle cx="2.5" cy="2.5" r=".8"/><circle cx="2.5" cy="6" r=".8"/><circle cx="2.5" cy="9.5" r=".8"/><circle cx="2.5" cy="13" r=".8"/></g></svg>
<div style="position:absolute;left:0px;top:255px;width:1920px;height:27px;background:#1f2024;"></div>
<div style="position:absolute;left:53px;top:282px;width:1867px;height:711px;background:#000;"></div>
<div style="position:absolute;left:53px;top:255px;width:219px;height:23px;background:#333438;"></div>
<div style="position:absolute;left:272px;top:255px;width:1px;height:23px;background:#000;"></div>
<div style="position:absolute;left:273px;top:255px;width:219px;height:23px;background:#333438;"></div>
<div style="position:absolute;left:492px;top:255px;width:217px;height:27px;background:#1f2024;"></div>
<div style="position:absolute;left:710px;top:255px;width:27px;height:22px;background:#333438;"></div>
<div style="position:absolute;left:53px;top:278px;width:439px;height:1px;background:#000;"></div>
<div style="position:absolute;left:737px;top:277px;width:1183px;height:1px;background:#000;"></div>
<div style="position:absolute;left:1919px;top:255px;width:1px;height:27px;background:#000;"></div>
<div class="t" style="left:-148px;width:600px;text-align:center;top:261.59px;font-size:12.3px;line-height:12.3px;color:#dcdcdc;transform:scaleX(0.96);">screens.dwg</div>
<div class="t" style="left:72px;width:600px;text-align:center;top:261.59px;font-size:12.3px;line-height:12.3px;color:#dcdcdc;transform:scaleX(0.96);">NONAME_2.dwg*</div>
<div class="t" style="left:291px;width:600px;text-align:center;top:261.59px;font-size:12.3px;line-height:12.3px;color:#dcdcdc;transform:scaleX(0.96);">NONAME_3.dwg*</div>
<svg style="position:absolute;left:0px;top:0px;overflow:visible" width="1920" height="300" viewBox="0 0 1920 300"><path d="M245 260.5L257 272.5M257 260.5L245 272.5" stroke="#e8e8e8" stroke-width="1.1"/><path d="M465 260.5L477 272.5M477 260.5L465 272.5" stroke="#e8e8e8" stroke-width="1.1"/><path d="M685 260.5L697 272.5M697 260.5L685 272.5" stroke="#e8e8e8" stroke-width="1.1"/><path d="M717 266H729M723 260V272" stroke="#d8d8d8" stroke-width="2"/></svg>
<div style="position:absolute;left:0px;top:255px;width:22px;height:738px;background:#333438;"></div>
<div style="position:absolute;left:0px;top:255px;width:21px;height:105px;background:#222327;"></div>
<div style="position:absolute;left:22px;top:255px;width:24px;height:752px;background:#222327;"></div>
<div style="position:absolute;left:21px;top:255px;width:1px;height:752px;background:#111;"></div>
<div style="position:absolute;left:45px;top:255px;width:1px;height:752px;background:#111;"></div>
<div style="position:absolute;left:46px;top:255px;width:7px;height:738px;background:#333438;"></div>
<div style="position:absolute;left:25px;top:280px;width:20px;height:20px;background:#000;"></div>
<svg style="position:absolute;left:0px;top:0px;overflow:visible" width="60" height="1038" viewBox="0 0 60 1038"><path d="M30.5 259.5L39.5 268.5M39.5 259.5L30.5 268.5" stroke="#f0f0f0" stroke-width="1.6"/>
<g transform="translate(35,290) rotate(-35)"><path d="M-6 -3H2L5 -5V5L2 3H-6Z" fill="#cfcfcf"/><path d="M-6 0H-11" stroke="#cfcfcf" stroke-width="1.5"/><rect x="4" y="-6" width="2" height="12" fill="#cfcfcf"/></g></svg>
<div class="t" style="left:-40px;top:302px;width:100px;height:14px;transform:rotate(-90deg);text-align:center;font-size:11.5px;line-height:14px;color:#d8d8d8">FLM - Elements</div>
<div class="t" style="left:-15px;top:926px;width:100px;height:16px;transform:rotate(-90deg);text-align:center;font-size:12px;line-height:16px;font-weight:bold;color:#f0f0f0">FLM - Elements</div>
<div class="t" style="left:61px;top:286.71px;transform-origin:left;font-size:12.75px;line-height:12.75px;color:#f4f4f4;-webkit-text-stroke:0.3px #f4f4f4">[-][Custom View][Realistic]</div>
<svg style="position:absolute;left:0px;top:0px;overflow:visible" width="1920" height="1038" viewBox="0 0 1920 1038"><defs>
<linearGradient id="cylg" gradientUnits="userSpaceOnUse" x1="803.4" y1="641.5" x2="858.6" y2="788.5">
<stop offset="0" stop-color="#3a8fe0"/><stop offset=".45" stop-color="#3b90e2"/><stop offset=".55" stop-color="#6dbaf7"/><stop offset=".61" stop-color="#c4eaff"/><stop offset=".67" stop-color="#78c2fa"/><stop offset=".8" stop-color="#3384d4"/><stop offset="1" stop-color="#2f7bc8"/>
</linearGradient>
</defs><polygon points="904.7,518.6 1112.0,439.5 1222.7,568.8 1012.4,646.5" fill="#368ce0" stroke="#368ce0" stroke-width="0.7"/><polygon points="1012.4,646.5 1222.7,568.8 1221.0,736.0 1014.7,811.0" fill="#3886d4" stroke="#3886d4" stroke-width="0.7"/><polygon points="866.0,478.0 904.7,518.6 1012.4,646.5 1013.0,866.0 866.6,697.5" fill="#2f7fce" stroke="#2f7fce" stroke-width="0.7"/><polygon points="1006.0,640.0 1013.0,646.5 1014.7,811.0 1013.0,866.0 1006.0,858.0" fill="#2f7fce" stroke="#2f7fce" stroke-width="0.7"/><polygon points="1112.0,439.5 1117.3,433.0 1230.6,563.8 1222.7,568.8" fill="#3182d2" stroke="#3182d2" stroke-width="0.7"/><polyline points="1117.3,433.0 1230.6,563.8" stroke="#2a74bf" stroke-width="1.2" fill="none"/><polygon points="1172.6,371.0 1117.3,433.0 1230.6,563.8 1312.8,534.2" fill="#47a4fa" stroke="#47a4fa" stroke-width="0.7"/><polygon points="1172.6,371.0 1214.4,365.6 1347.9,519.3 1312.8,534.2" fill="#3589da" stroke="#3589da" stroke-width="0.7"/><polygon points="1230.6,563.8 1312.8,534.2 1312.8,746.4 1229.3,736.5" fill="#2e7bc6" stroke="#2e7bc6" stroke-width="0.7"/><polygon points="1312.8,534.2 1347.9,519.3 1347.2,725.0 1312.8,746.4" fill="#3688d6" stroke="#3688d6" stroke-width="0.7"/><polygon points="1222.7,568.8 1230.6,563.8 1229.3,736.5 1221.0,736.0" fill="#3a8ad8" stroke="#3a8ad8" stroke-width="0.7"/><polygon points="1222.7,568.8 1230.6,563.8 1231.0,566.0 1223.0,571.0" fill="#bfe4ff"/><path d="M1237 647L1251 645L1252 651L1238 653Z" fill="#3b8fe0"/><ellipse cx="1244" cy="657" rx="6" ry="4" fill="none" stroke="#5aa8ee" stroke-width=".8"/><path d="M974.9 742.6A76.5 27.3 69.39 1 0 921.1 599.4A76.5 27.3 69.39 1 0 974.9 742.6Z" fill="#2f7fce" /><polygon points="916.4,601.1 921.1,599.4 974.9,742.6 970.3,744.4" fill="#2f7fce"/><path d="M970.3 744.4A76.5 27.3 69.39 1 0 916.4 601.1A76.5 27.3 69.39 1 0 970.3 744.4Z" fill="#3080d0" /><path d="M916.4 601.1A76.5 27.3 69.39 0 1 970.3 744.4" fill="none" stroke="#8cc8f4" stroke-width="0.8" stroke-dasharray="1.5 1.5"/><path d="M968.6 740.0A71.8 25.6 69.39 1 0 918.0 605.5A71.8 25.6 69.39 1 0 968.6 740.0Z" fill="url(#cylg)" /><polygon points="867.5,624.5 918.0,605.5 968.6,740.0 918.1,759.0" fill="url(#cylg)"/><path d="M919.4 762.7A75.8 27.0 69.39 1 0 866.1 620.9A75.8 27.0 69.39 1 0 919.4 762.7Z" fill="url(#cylg)" /><polygon points="857.7,624.0 866.1,620.9 919.4,762.7 911.0,765.8" fill="url(#cylg)"/><path d="M866.8 622.7A73.8 26.3 69.39 0 1 918.8 760.8" fill="none" stroke="#2b72bd" stroke-width="2"/><path d="M911.0 765.8A75.8 27.0 69.39 1 0 857.7 624.0A75.8 27.0 69.39 1 0 911.0 765.8Z" fill="#3384d2" /><path d="M908.9 760.3A69.9 24.9 69.39 1 0 859.8 629.5A69.9 24.9 69.39 1 0 908.9 760.3Z" fill="url(#cylg)" /><polygon points="813.9,646.8 859.8,629.5 908.9,760.3 863.1,777.6" fill="url(#cylg)"/><path d="M863.1 777.6A69.9 24.9 69.39 1 0 813.9 646.8A69.9 24.9 69.39 1 0 863.1 777.6Z" fill="#2e7ac6" /><path d="M866.1 785.7A78.5 28.0 69.39 1 0 810.9 638.7A78.5 28.0 69.39 1 0 866.1 785.7Z" fill="#3384d4" /><polygon points="803.4,641.5 810.9,638.7 866.1,785.7 858.6,788.5" fill="#3384d4"/><path d="M858.6 788.5A78.5 28.0 69.39 1 0 803.4 641.5A78.5 28.0 69.39 1 0 858.6 788.5Z" fill="#2f7bc9" /><g fill="none" stroke="#f4f4f4" stroke-width="1.1" stroke-linejoin="miter"><polyline points="752.2,688 792.7,672.9 870.6,763.5 831,779"/><polyline points="800.8,682 760.3,696.2"/><polyline points="862.5,754.8 823,768"/><polygon points="742.1,697.2 748.2,684 763.4,701.2"/><polygon points="811.9,779.7 818,766 833.2,783.2"/><path d="M824.5 715.4H838M831.1 708.5V722.3M851.5 731.6H865.5M858.4 724.8V738.5"/></g><path d="M614 790L669 856" stroke="#ff1010" stroke-width="1.3"/><path d="M592 841L690 804" stroke="#10e010" stroke-width="1.3"/><path d="M641 781V865" stroke="#1010ff" stroke-width="1.3"/></svg>
<div style="position:absolute;left:672px;top:834px;width:161px;height:21px;background:#a8a8a8;"></div>
<div class="t" style="left:676px;top:838.50px;transform-origin:left;font-size:13px;line-height:13px;color:#0a0a0a;">Show installation direction:</div>
<div style="position:absolute;left:845px;top:834px;width:69px;height:20px;background:#ffffff;"></div>
<div style="position:absolute;left:847px;top:836px;width:63px;height:16px;background:#3279d3;"></div>
<div class="t" style="left:847px;top:838.00px;transform-origin:left;font-size:13px;line-height:13px;color:#ffffff;">28364.186</div>
<div style="position:absolute;left:910px;top:836px;width:1.3px;height:16px;background:#ff7a00;"></div>
<div style="position:absolute;left:922px;top:833px;width:58px;height:20px;background:#a8a8a8;"></div>
<div class="t" style="left:929px;top:837.00px;transform-origin:left;font-size:13px;line-height:13px;color:#0a0a0a;"><  135</div>
<div class="t" style="left:974px;top:834.69px;transform-origin:left;font-size:11px;line-height:11px;color:#0a0a0a;">°</div>
<div style="position:absolute;left:0px;top:993px;width:1920px;height:45px;background:#333438;"></div>
<svg style="position:absolute;left:0px;top:0px;overflow:visible" width="1920" height="1038" viewBox="0 0 1920 1038"><circle cx="1798.8" cy="366.8" r="74" fill="#6e6e6e"/><circle cx="1798.8" cy="366.8" r="44.5" fill="#000"/><circle cx="1798.8" cy="366.8" r="41" fill="#6e6e6e"/><circle cx="1798.8" cy="366.8" r="27.2" fill="#000"/><path d="M1814.9 328.0L1827.9 296.6" stroke="#000" stroke-width="3.2"/><path d="M1837.6 350.7L1869.0 337.7" stroke="#000" stroke-width="3.2"/><path d="M1837.6 382.9L1869.0 395.9" stroke="#000" stroke-width="3.2"/><path d="M1814.9 405.6L1827.9 437.0" stroke="#000" stroke-width="3.2"/><path d="M1782.7 405.6L1769.7 437.0" stroke="#000" stroke-width="3.2"/><path d="M1760.0 382.9L1728.6 395.9" stroke="#000" stroke-width="3.2"/><path d="M1760.0 350.7L1728.6 337.7" stroke="#000" stroke-width="3.2"/><path d="M1782.7 328.0L1769.7 296.6" stroke="#000" stroke-width="3.2"/><path d="M1756.8 366.8H1772.8M1824.8 366.8H1840.8" stroke="#000" stroke-width="3.2"/><rect x="1884.5" y="292.5" width="25" height="25" fill="#6e6e6e" stroke="#858585" stroke-width="1"/><rect x="1884.5" y="323.5" width="25" height="25" fill="#6e6e6e" stroke="#858585" stroke-width="1"/><rect x="1884.5" y="354.5" width="25" height="25" fill="#787878" stroke="#858585" stroke-width="1"/><rect x="1884.5" y="385.5" width="25" height="25" fill="#6e6e6e" stroke="#858585" stroke-width="1"/><rect x="1884.5" y="416.5" width="25" height="25" fill="#6e6e6e" stroke="#858585" stroke-width="1"/><path d="M1889.5 305.5L1897 298.5L1904.5 305.5V311.5H1890.5V305.5Z" fill="#7a8794" stroke="#2a2a2a" stroke-width="1.1"/><path d="M1891.5 331A7.3 7.3 0 1 1 1890.5 340" fill="none" stroke="#5b8fbc" stroke-width="1"/><path d="M1887.5 330.5L1894.5 329.5L1889.5 336Z" fill="#2f86d2"/><text x="1897" y="372" text-anchor="middle" font-family="Liberation Sans" font-size="12" fill="#383838">90</text><path d="M1902.5 393A7.3 7.3 0 1 0 1903.5 402" fill="none" stroke="#5b8fbc" stroke-width="1"/><path d="M1906.5 392.5L1899.5 391.5L1904.5 398Z" fill="#2f86d2"/><g transform="translate(1897,428.5)"><rect x="-1.6" y="-7" width="3.2" height="3.5" fill="#333" transform="rotate(0)"/><rect x="-1.6" y="-7" width="3.2" height="3.5" fill="#333" transform="rotate(45)"/><rect x="-1.6" y="-7" width="3.2" height="3.5" fill="#333" transform="rotate(90)"/><rect x="-1.6" y="-7" width="3.2" height="3.5" fill="#333" transform="rotate(135)"/><rect x="-1.6" y="-7" width="3.2" height="3.5" fill="#333" transform="rotate(180)"/><rect x="-1.6" y="-7" width="3.2" height="3.5" fill="#333" transform="rotate(225)"/><rect x="-1.6" y="-7" width="3.2" height="3.5" fill="#333" transform="rotate(270)"/><rect x="-1.6" y="-7" width="3.2" height="3.5" fill="#333" transform="rotate(315)"/><circle r="4.8" fill="#333"/><circle r="2" fill="#6e6e6e"/></g></svg>
<div style="position:absolute;left:21px;top:993px;width:25px;height:15px;background:#111;"></div>
<div style="position:absolute;left:22px;top:993px;width:23px;height:14px;background:#222327;"></div>
<svg style="position:absolute;left:0px;top:0px;overflow:visible" width="1920" height="1038" viewBox="0 0 1920 1038"><path d="M52.5 993H111.2L106.2 1007.5H58.7Z" fill="#6b6b6b"/>
<path d="M52.5 993L58.7 1007.5M111.3 993L106.2 1007.5M111.5 993L118.7 1007.5M177.5 993L172.5 1007.5M177.5 993L185 1007.5M243.7 993L238.7 1007.5" stroke="#121212" stroke-width="1.2" fill="none"/>
<rect x="251.5" y="993.5" width="22" height="14" fill="#333438" stroke="#1a1a1a"/>
<path d="M256 1000.5H269M262.5 994.5V1006.5" stroke="#d8d8d8" stroke-width="1.8"/></svg>
<div class="t" style="left:-217.7px;width:600px;text-align:center;top:995.17px;font-size:12.2px;line-height:12.2px;color:#e8e8e8;font-weight:bold">Model</div>
<div class="t" style="left:-154.4px;width:600px;text-align:center;top:995.00px;font-size:12.4px;line-height:12.4px;color:#e8e8e8;transform:scaleX(0.95);">Sheet1</div>
<div class="t" style="left:-88.1px;width:600px;text-align:center;top:995.00px;font-size:12.4px;line-height:12.4px;color:#e8e8e8;transform:scaleX(0.95);">Sheet2</div>
<div class="t" style="left:2px;top:1019.01px;transform-origin:left;font-size:11.8px;line-height:11.8px;color:#e0e0e0;transform:scaleX(0.95);">FLUID DESK BIM 2025 x64</div>
<div style="position:absolute;left:528px;top:1013px;width:40px;height:22px;background:#333438;box-sizing:border-box;border:1px solid #1c1d20;"></div>
<div class="t" style="left:247.75px;width:600px;text-align:center;top:1018.76px;font-size:12.1px;line-height:12.1px;color:#e0e0e0;transform:scaleX(0.95);">Snap</div>
<div style="position:absolute;left:574px;top:1013px;width:35px;height:22px;background:#333438;box-sizing:border-box;border:1px solid #1c1d20;"></div>
<div class="t" style="left:291.70000000000005px;width:600px;text-align:center;top:1018.76px;font-size:12.1px;line-height:12.1px;color:#e0e0e0;transform:scaleX(0.95);">Grid</div>
<div style="position:absolute;left:616px;top:1013px;width:45px;height:22px;background:#222327;box-sizing:border-box;border:1px solid #1c1d20;"></div>
<div class="t" style="left:338.5px;width:600px;text-align:center;top:1018.76px;font-size:12.1px;line-height:12.1px;color:#e0e0e0;transform:scaleX(0.95);">Ortho</div>
<div style="position:absolute;left:669px;top:1013px;width:40px;height:22px;background:#333438;box-sizing:border-box;border:1px solid #1c1d20;"></div>
<div class="t" style="left:388.875px;width:600px;text-align:center;top:1018.76px;font-size:12.1px;line-height:12.1px;color:#e0e0e0;transform:scaleX(0.95);">Polar</div>
<div style="position:absolute;left:715px;top:1013px;width:46px;height:22px;background:#222327;box-sizing:border-box;border:1px solid #1c1d20;"></div>
<div class="t" style="left:437.79999999999995px;width:600px;text-align:center;top:1018.76px;font-size:12.1px;line-height:12.1px;color:#e0e0e0;transform:scaleX(0.95);">ESnap</div>
<div style="position:absolute;left:767px;top:1013px;width:46px;height:22px;background:#333438;box-sizing:border-box;border:1px solid #1c1d20;"></div>
<div class="t" style="left:490.20000000000005px;width:600px;text-align:center;top:1018.76px;font-size:12.1px;line-height:12.1px;color:#e0e0e0;transform:scaleX(0.95);">ETrack</div>
<div style="position:absolute;left:820px;top:1013px;width:50px;height:22px;background:#222327;box-sizing:border-box;border:1px solid #1c1d20;"></div>
<div class="t" style="left:544.85px;width:600px;text-align:center;top:1018.76px;font-size:12.1px;line-height:12.1px;color:#e0e0e0;transform:scaleX(0.95);">QInput</div>
<div style="position:absolute;left:876px;top:1013px;width:102px;height:22px;background:#333438;box-sizing:border-box;border:1px solid #1c1d20;"></div>
<div class="t" style="left:627.2px;width:600px;text-align:center;top:1018.76px;font-size:12.1px;line-height:12.1px;color:#e0e0e0;transform:scaleX(0.95);">Cycling Selection</div>
<div style="position:absolute;left:985px;top:1013px;width:56px;height:22px;background:#333438;box-sizing:border-box;border:1px solid #1c1d20;"></div>
<div class="t" style="left:712.9499999999999px;width:600px;text-align:center;top:1018.76px;font-size:12.1px;line-height:12.1px;color:#e0e0e0;transform:scaleX(0.95);">LWeight</div>
<div style="position:absolute;left:1047px;top:1013px;width:53px;height:22px;background:#222327;box-sizing:border-box;border:1px solid #1c1d20;"></div>
<div class="t" style="left:773.3px;width:600px;text-align:center;top:1018.76px;font-size:12.1px;line-height:12.1px;color:#e0e0e0;transform:scaleX(0.95);">MODEL</div>
<div style="position:absolute;left:1106px;top:1013px;width:85px;height:22px;background:#333438;box-sizing:border-box;border:1px solid #1c1d20;"></div>
<div class="t" style="left:848.95px;width:600px;text-align:center;top:1018.76px;font-size:12.1px;line-height:12.1px;color:#e0e0e0;transform:scaleX(0.95);">Dynamic CCS</div>
<div style="position:absolute;left:1196px;top:1013px;width:63px;height:22px;background:#333438;box-sizing:border-box;border:1px solid #1c1d20;"></div>
<div class="t" style="left:927.5px;width:600px;text-align:center;top:1018.76px;font-size:12.1px;line-height:12.1px;color:#e0e0e0;transform:scaleX(0.95);">AMonitor</div>
<div style="position:absolute;left:1268px;top:1013px;width:95px;height:22px;background:#333438;box-sizing:border-box;border:1px solid #1c1d20;"></div>
<div class="t" style="left:1271px;top:1018.76px;transform-origin:left;font-size:12.1px;line-height:12.1px;color:#e0e0e0;transform:scaleX(0.95);">Annotation</div>
<svg style="position:absolute;left:1345px;top:1021px;overflow:visible" width="9" height="6" viewBox="0 0 9 6"><path d="M0 0H9L4.5 5Z" fill="#e0e0e0"/></svg>
<div class="t" style="left:1370px;top:1018.76px;transform-origin:left;font-size:12.1px;line-height:12.1px;color:#e0e0e0;transform:scaleX(0.95);">(1:1)</div>
<div style="position:absolute;left:1401px;top:1011px;width:518px;height:26px;background:#111215;box-sizing:border-box;border:1px solid #3c3d41;"></div>
<div style="position:absolute;left:1659px;top:1012px;width:259px;height:24px;background:#2a2b2f;"></div>
<div class="t" style="left:1359px;width:600px;text-align:center;top:1019.01px;font-size:11.8px;line-height:11.8px;color:#f4f4f4;-webkit-text-stroke:0.35px #f4f4f4">Processing...</div>
</body></html>
